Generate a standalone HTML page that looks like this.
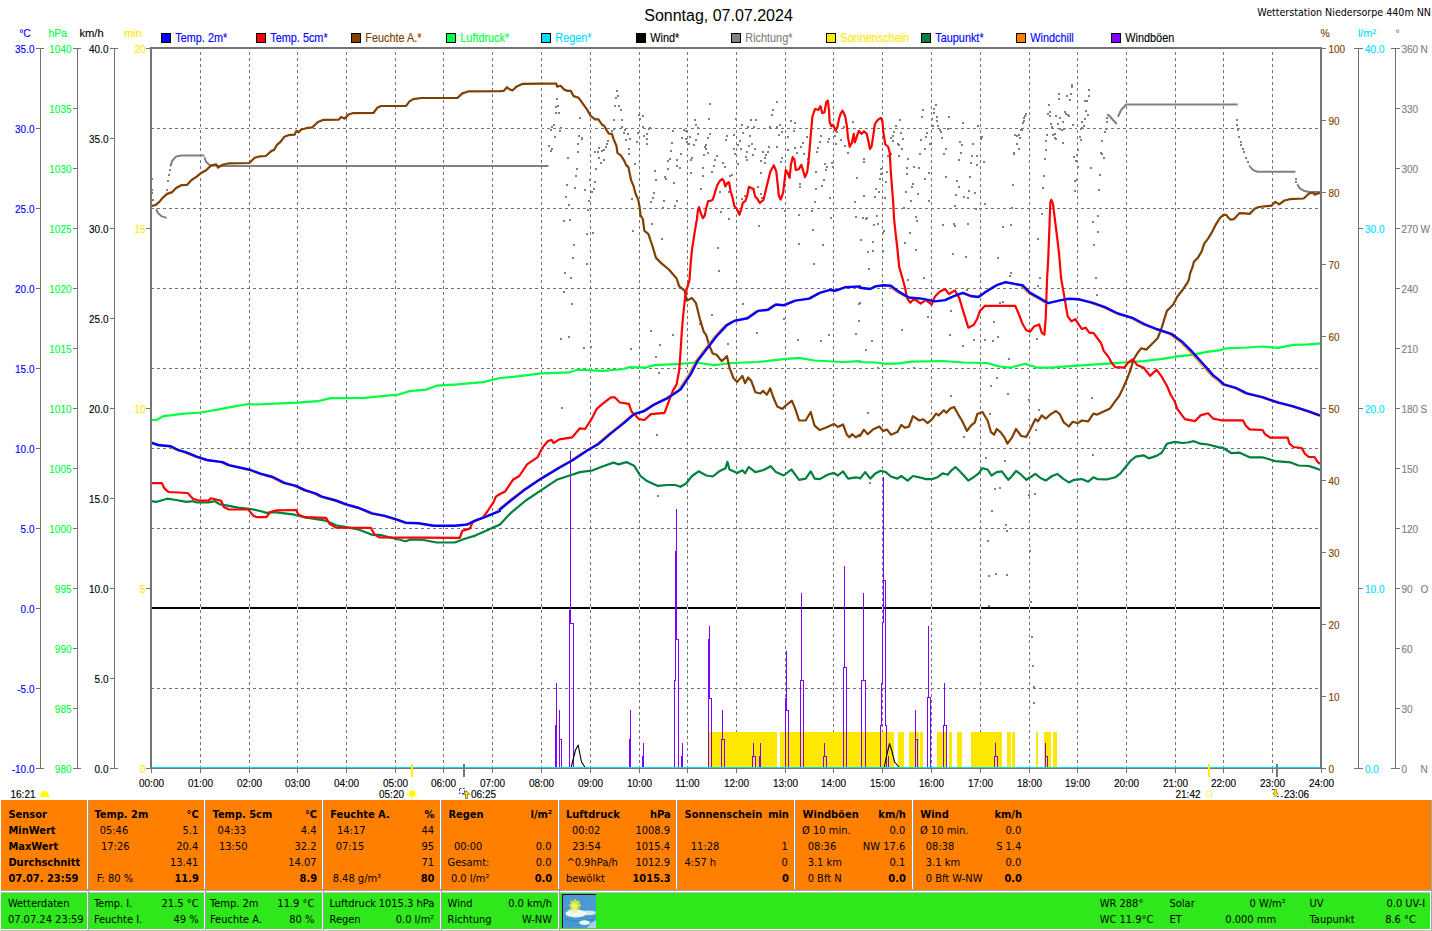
<!DOCTYPE html>
<html lang="de"><head><meta charset="utf-8"><title>Wetterstation Niedersorpe</title>
<style>html,body{margin:0;padding:0;background:#fff;overflow:hidden}body{width:1432px;height:931px;position:relative}</style></head>
<body>
<svg width="1432" height="931" viewBox="0 0 1432 931" style="position:absolute;left:0;top:0;display:block">
<rect x="0" y="0" width="1432" height="931" fill="#fff"/>
<text x="718.5" y="21" font-family='"Liberation Sans", sans-serif' font-size="16" text-anchor="middle" fill="#000">Sonntag, 07.07.2024</text>
<text x="1431" y="15.5" font-family='"DejaVu Sans Condensed", "DejaVu Sans", "Liberation Sans", sans-serif' font-size="10.6" text-anchor="end" fill="#000">Wetterstation Niedersorpe 440m NN</text>
<g font-family='"Liberation Sans", sans-serif' font-size="12.5">
<rect x="161.5" y="33.5" width="9" height="9" fill="#0000FF" stroke="#000" stroke-width="1"/>
<text transform="translate(175.3,42.3) scale(0.87,1)" fill="#0000FF" stroke="#0000FF" stroke-width="0.14">Temp. 2m*</text>
<rect x="256.5" y="33.5" width="9" height="9" fill="#FF0000" stroke="#000" stroke-width="1"/>
<text transform="translate(270.3,42.3) scale(0.87,1)" fill="#0000FF" stroke="#0000FF" stroke-width="0.14">Temp. 5cm*</text>
<rect x="351.5" y="33.5" width="9" height="9" fill="#804000" stroke="#000" stroke-width="1"/>
<text transform="translate(365.3,42.3) scale(0.87,1)" fill="#804000" stroke="#804000" stroke-width="0.14">Feuchte A.*</text>
<rect x="446.5" y="33.5" width="9" height="9" fill="#00FF40" stroke="#000" stroke-width="1"/>
<text transform="translate(460.3,42.3) scale(0.87,1)" fill="#00FF40" stroke="#00FF40" stroke-width="0.14">Luftdruck*</text>
<rect x="541.5" y="33.5" width="9" height="9" fill="#00DCFF" stroke="#000" stroke-width="1"/>
<text transform="translate(555.3,42.3) scale(0.87,1)" fill="#00DCFF" stroke="#00DCFF" stroke-width="0.14">Regen*</text>
<rect x="636.5" y="33.5" width="9" height="9" fill="#000000" stroke="#000" stroke-width="1"/>
<text transform="translate(650.3,42.3) scale(0.87,1)" fill="#000000" stroke="#000000" stroke-width="0.14">Wind*</text>
<rect x="731.5" y="33.5" width="9" height="9" fill="#808080" stroke="#000" stroke-width="1"/>
<text transform="translate(745.3,42.3) scale(0.87,1)" fill="#808080" stroke="#808080" stroke-width="0.14">Richtung*</text>
<rect x="826.5" y="33.5" width="9" height="9" fill="#FFE800" stroke="#000" stroke-width="1"/>
<text transform="translate(840.3,42.3) scale(0.87,1)" fill="#FFE800" stroke="#FFE800" stroke-width="0.14">Sonnenschein</text>
<rect x="921.5" y="33.5" width="9" height="9" fill="#008040" stroke="#000" stroke-width="1"/>
<text transform="translate(935.3,42.3) scale(0.87,1)" fill="#0000FF" stroke="#0000FF" stroke-width="0.14">Taupunkt*</text>
<rect x="1016.5" y="33.5" width="9" height="9" fill="#FF8000" stroke="#000" stroke-width="1"/>
<text transform="translate(1030.3,42.3) scale(0.87,1)" fill="#0000FF" stroke="#0000FF" stroke-width="0.14">Windchill</text>
<rect x="1111.5" y="33.5" width="9" height="9" fill="#8000FF" stroke="#000" stroke-width="1"/>
<text transform="translate(1125.3,42.3) scale(0.87,1)" fill="#000000" stroke="#000000" stroke-width="0.14">Windböen</text>
</g>
<rect x="152" y="607" width="1168" height="2" fill="#000" shape-rendering="crispEdges"/>
<g stroke="#747474" stroke-width="1" stroke-dasharray="3 3" shape-rendering="crispEdges" fill="none">
<path d="M151 128.5H1320"/>
<path d="M151 208.5H1320"/>
<path d="M151 288.5H1320"/>
<path d="M151 368.5H1320"/>
<path d="M151 448.5H1320"/>
<path d="M151 528.5H1320"/>
<path d="M151 688.5H1320"/>
</g>
<g fill="#fff" shape-rendering="crispEdges">
<rect x="200" y="49" width="1" height="718"/>
<rect x="249" y="49" width="1" height="718"/>
<rect x="297" y="49" width="1" height="718"/>
<rect x="346" y="49" width="1" height="718"/>
<rect x="395" y="49" width="1" height="718"/>
<rect x="443" y="49" width="1" height="718"/>
<rect x="492" y="49" width="1" height="718"/>
<rect x="541" y="49" width="1" height="718"/>
<rect x="590" y="49" width="1" height="718"/>
<rect x="639" y="49" width="1" height="718"/>
<rect x="687" y="49" width="1" height="718"/>
<rect x="736" y="49" width="1" height="718"/>
<rect x="785" y="49" width="1" height="718"/>
<rect x="833" y="49" width="1" height="718"/>
<rect x="882" y="49" width="1" height="718"/>
<rect x="931" y="49" width="1" height="718"/>
<rect x="980" y="49" width="1" height="718"/>
<rect x="1029" y="49" width="1" height="718"/>
<rect x="1077" y="49" width="1" height="718"/>
<rect x="1126" y="49" width="1" height="718"/>
<rect x="1175" y="49" width="1" height="718"/>
<rect x="1223" y="49" width="1" height="718"/>
<rect x="1272" y="49" width="1" height="718"/>
</g>
<g stroke="#747474" stroke-width="1" stroke-dasharray="3 3" shape-rendering="crispEdges" fill="none">
<path d="M200.5 52V767"/>
<path d="M249.5 52V767"/>
<path d="M297.5 52V767"/>
<path d="M346.5 52V767"/>
<path d="M395.5 52V767"/>
<path d="M443.5 52V767"/>
<path d="M492.5 52V767"/>
<path d="M541.5 52V767"/>
<path d="M590.5 52V767"/>
<path d="M639.5 52V767"/>
<path d="M687.5 52V767"/>
<path d="M736.5 52V767"/>
<path d="M785.5 52V767"/>
<path d="M833.5 52V767"/>
<path d="M882.5 52V767"/>
<path d="M931.5 52V767"/>
<path d="M980.5 52V767"/>
<path d="M1029.5 52V767"/>
<path d="M1077.5 52V767"/>
<path d="M1126.5 52V767"/>
<path d="M1175.5 52V767"/>
<path d="M1223.5 52V767"/>
<path d="M1272.5 52V767"/>
</g>
<g fill="#FFE800" shape-rendering="crispEdges">
<rect x="708.5" y="732" width="68.5" height="36"/>
<rect x="780.4" y="732" width="113.4" height="36"/>
<rect x="898.2" y="732" width="5.7" height="36"/>
<rect x="909.3" y="732" width="9.7" height="36"/>
<rect x="919.8" y="732" width="2.9" height="36"/>
<rect x="937.2" y="732" width="9.1" height="36"/>
<rect x="949.4" y="732" width="2.5" height="36"/>
<rect x="957.1" y="732" width="4.7" height="36"/>
<rect x="970.8" y="732" width="31.0" height="36"/>
<rect x="1007.0" y="732" width="3.6" height="36"/>
<rect x="1012.1" y="732" width="2.9" height="36"/>
<rect x="1035.9" y="732" width="2.1" height="36"/>
<rect x="1044.2" y="732" width="6.7" height="36"/>
<rect x="1052.7" y="732" width="4.1" height="36"/>
</g>
<g stroke="#8000FF" stroke-width="1" fill="none" stroke-linejoin="miter" shape-rendering="crispEdges">
<path d="M555.4 768.0 L555.4 725.5 L556.3 725.5 L556.3 683.0 L556.5 683.0 L556.5 768.0"/>
<path d="M559.2 768.0 L559.2 710.0 L559.4 710.0 L559.4 739.0 L561.3 739.0 L561.3 768.0"/>
<path d="M569.5 768.0 L569.5 610.0 L570.7 610.0 L570.7 451.0 L570.9 451.0 L570.9 623.0 L573.0 623.0 L573.0 768.0"/>
<path d="M629.3 768.0 L629.3 739.0 L630.2 739.0 L630.2 710.0 L630.4 710.0 L630.4 768.0"/>
<path d="M642.5 768.0 L642.5 756.0 L643.4 756.0 L643.4 743.0 L643.6 743.0 L643.6 768.0"/>
<path d="M674.4 768.0 L674.4 680.0 L675.3 680.0 L675.3 551.0 L676.2 551.0 L676.2 509.0 L676.4 509.0 L676.4 639.0 L678.3 639.0 L678.3 768.0"/>
<path d="M681.3 768.0 L681.3 756.0 L682.2 756.0 L682.2 743.0 L682.4 743.0 L682.4 768.0"/>
<path d="M708.4 768.0 L708.4 639.0 L709.6 639.0 L709.6 626.0 L709.8 626.0 L709.8 698.0 L711.4 698.0 L711.4 768.0"/>
<path d="M721.6 768.0 L721.6 739.0 L722.5 739.0 L722.5 710.0 L722.7 710.0 L722.7 739.0 L724.3 739.0 L724.3 768.0"/>
<path d="M752.6 768.0 L752.6 756.0 L753.5 756.0 L753.5 743.0 L753.7 743.0 L753.7 756.0 L755.2 756.0 L755.2 768.0"/>
<path d="M759.5 768.0 L759.5 756.0 L760.4 756.0 L760.4 743.0 L760.6 743.0 L760.6 768.0"/>
<path d="M785.6 768.0 L785.6 698.0 L786.3 698.0 L786.3 651.0 L786.5 651.0 L786.5 710.0 L788.3 710.0 L788.3 768.0"/>
<path d="M800.4 768.0 L800.4 680.0 L801.6 680.0 L801.6 593.0 L801.8 593.0 L801.8 680.0 L803.5 680.0 L803.5 768.0"/>
<path d="M823.4 768.0 L823.4 756.0 L824.3 756.0 L824.3 743.0 L824.5 743.0 L824.5 756.0 L826.0 756.0 L826.0 768.0"/>
<path d="M843.4 768.0 L843.4 667.0 L844.6 667.0 L844.6 566.0 L844.8 566.0 L844.8 667.0 L846.5 667.0 L846.5 768.0"/>
<path d="M861.8 768.0 L861.8 680.0 L863.0 680.0 L863.0 593.0 L863.2 593.0 L863.2 680.0 L865.0 680.0 L865.0 768.0"/>
<path d="M880.2 768.0 L880.2 725.0 L881.0 725.0 L881.0 683.0 L882.2 683.0 L882.2 622.0 L883.4 622.0 L883.4 477.0 L883.6 477.0 L883.6 580.0 L885.6 580.0 L885.6 725.0 L886.5 725.0 L886.5 768.0"/>
<path d="M888.6 768.0 L888.6 756.0 L888.8 756.0 L888.8 768.0"/>
<path d="M915.3 768.0 L915.3 710.0 L915.5 710.0 L915.5 739.0 L917.1 739.0 L917.1 768.0"/>
<path d="M927.3 768.0 L927.3 697.0 L928.3 697.0 L928.3 626.0 L928.5 626.0 L928.5 697.0 L930.3 697.0 L930.3 768.0"/>
<path d="M943.3 768.0 L943.3 725.0 L944.5 725.0 L944.5 683.0 L944.7 683.0 L944.7 725.0 L946.6 725.0 L946.6 768.0"/>
<path d="M994.4 768.0 L994.4 756.0 L995.3 756.0 L995.3 743.0 L995.5 743.0 L995.5 756.0 L997.0 756.0 L997.0 768.0"/>
<path d="M1045.6 768.0 L1045.6 743.0 L1045.8 743.0 L1045.8 756.0 L1047.4 756.0 L1047.4 768.0"/>
</g>
<g fill="#808080" shape-rendering="crispEdges">
<rect x="151" y="178" width="2" height="2"/>
<rect x="151" y="189" width="2" height="2"/>
<rect x="151" y="192" width="2" height="2"/>
<rect x="152" y="199" width="2" height="2"/>
<rect x="155" y="204" width="2" height="2"/>
<rect x="165" y="194" width="2" height="2"/>
<rect x="166" y="189" width="2" height="2"/>
<rect x="167" y="180" width="2" height="2"/>
<rect x="168" y="174" width="2" height="2"/>
<rect x="169" y="169" width="2" height="2"/>
<rect x="1236" y="119" width="2" height="2"/>
<rect x="1236" y="124" width="2" height="2"/>
<rect x="1237" y="129" width="2" height="2"/>
<rect x="1238" y="136" width="2" height="2"/>
<rect x="1240" y="141" width="2" height="2"/>
<rect x="1240" y="144" width="2" height="2"/>
<rect x="1242" y="148" width="2" height="2"/>
<rect x="1243" y="151" width="2" height="2"/>
<rect x="1245" y="157" width="2" height="2"/>
<rect x="1247" y="161" width="2" height="2"/>
<rect x="1295" y="178" width="2" height="2"/>
<rect x="1295" y="181" width="2" height="2"/>
<rect x="569" y="219" width="2" height="2"/>
<rect x="563" y="220" width="2" height="2"/>
<rect x="586" y="233" width="2" height="2"/>
<rect x="592" y="232" width="2" height="2"/>
<rect x="573" y="244" width="2" height="2"/>
<rect x="572" y="257" width="2" height="2"/>
<rect x="586" y="263" width="2" height="2"/>
<rect x="564" y="272" width="2" height="2"/>
<rect x="570" y="277" width="2" height="2"/>
<rect x="632" y="230" width="2" height="2"/>
<rect x="651" y="223" width="2" height="2"/>
<rect x="661" y="238" width="2" height="2"/>
<rect x="717" y="247" width="2" height="2"/>
<rect x="718" y="270" width="2" height="2"/>
<rect x="758" y="225" width="2" height="2"/>
<rect x="798" y="243" width="2" height="2"/>
<rect x="812" y="229" width="2" height="2"/>
<rect x="813" y="263" width="2" height="2"/>
<rect x="822" y="244" width="2" height="2"/>
<rect x="865" y="218" width="2" height="2"/>
<rect x="860" y="239" width="2" height="2"/>
<rect x="868" y="268" width="2" height="2"/>
<rect x="867" y="251" width="2" height="2"/>
<rect x="872" y="241" width="2" height="2"/>
<rect x="872" y="250" width="2" height="2"/>
<rect x="873" y="224" width="2" height="2"/>
<rect x="877" y="223" width="2" height="2"/>
<rect x="882" y="232" width="2" height="2"/>
<rect x="883" y="230" width="2" height="2"/>
<rect x="882" y="250" width="2" height="2"/>
<rect x="916" y="220" width="2" height="2"/>
<rect x="909" y="232" width="2" height="2"/>
<rect x="904" y="242" width="2" height="2"/>
<rect x="915" y="249" width="2" height="2"/>
<rect x="942" y="224" width="2" height="2"/>
<rect x="923" y="277" width="2" height="2"/>
<rect x="953" y="223" width="2" height="2"/>
<rect x="954" y="225" width="2" height="2"/>
<rect x="952" y="253" width="2" height="2"/>
<rect x="965" y="256" width="2" height="2"/>
<rect x="967" y="223" width="2" height="2"/>
<rect x="1010" y="224" width="2" height="2"/>
<rect x="1002" y="226" width="2" height="2"/>
<rect x="997" y="257" width="2" height="2"/>
<rect x="1010" y="272" width="2" height="2"/>
<rect x="1009" y="275" width="2" height="2"/>
<rect x="1037" y="238" width="2" height="2"/>
<rect x="1039" y="277" width="2" height="2"/>
<rect x="1092" y="221" width="2" height="2"/>
<rect x="1097" y="231" width="2" height="2"/>
<rect x="1093" y="244" width="2" height="2"/>
<rect x="1095" y="277" width="2" height="2"/>
<rect x="563" y="291" width="2" height="2"/>
<rect x="571" y="303" width="2" height="2"/>
<rect x="560" y="338" width="2" height="2"/>
<rect x="568" y="336" width="2" height="2"/>
<rect x="583" y="347" width="2" height="2"/>
<rect x="590" y="346" width="2" height="2"/>
<rect x="561" y="407" width="2" height="2"/>
<rect x="630" y="348" width="2" height="2"/>
<rect x="650" y="330" width="2" height="2"/>
<rect x="659" y="344" width="2" height="2"/>
<rect x="655" y="356" width="2" height="2"/>
<rect x="658" y="372" width="2" height="2"/>
<rect x="672" y="334" width="2" height="2"/>
<rect x="656" y="434" width="2" height="2"/>
<rect x="657" y="495" width="2" height="2"/>
<rect x="699" y="323" width="2" height="2"/>
<rect x="711" y="314" width="2" height="2"/>
<rect x="727" y="343" width="2" height="2"/>
<rect x="742" y="303" width="2" height="2"/>
<rect x="756" y="332" width="2" height="2"/>
<rect x="783" y="318" width="2" height="2"/>
<rect x="797" y="339" width="2" height="2"/>
<rect x="820" y="340" width="2" height="2"/>
<rect x="828" y="334" width="2" height="2"/>
<rect x="855" y="333" width="2" height="2"/>
<rect x="858" y="320" width="2" height="2"/>
<rect x="858" y="303" width="2" height="2"/>
<rect x="859" y="302" width="2" height="2"/>
<rect x="865" y="349" width="2" height="2"/>
<rect x="871" y="340" width="2" height="2"/>
<rect x="877" y="367" width="2" height="2"/>
<rect x="901" y="329" width="2" height="2"/>
<rect x="913" y="367" width="2" height="2"/>
<rect x="927" y="316" width="2" height="2"/>
<rect x="950" y="310" width="2" height="2"/>
<rect x="949" y="334" width="2" height="2"/>
<rect x="962" y="345" width="2" height="2"/>
<rect x="973" y="339" width="2" height="2"/>
<rect x="984" y="339" width="2" height="2"/>
<rect x="992" y="340" width="2" height="2"/>
<rect x="997" y="336" width="2" height="2"/>
<rect x="993" y="321" width="2" height="2"/>
<rect x="999" y="302" width="2" height="2"/>
<rect x="1002" y="301" width="2" height="2"/>
<rect x="1008" y="358" width="2" height="2"/>
<rect x="996" y="377" width="2" height="2"/>
<rect x="990" y="385" width="2" height="2"/>
<rect x="1007" y="393" width="2" height="2"/>
<rect x="950" y="395" width="2" height="2"/>
<rect x="867" y="412" width="2" height="2"/>
<rect x="963" y="436" width="2" height="2"/>
<rect x="989" y="413" width="2" height="2"/>
<rect x="1038" y="409" width="2" height="2"/>
<rect x="1035" y="429" width="2" height="2"/>
<rect x="1028" y="399" width="2" height="2"/>
<rect x="1091" y="397" width="2" height="2"/>
<rect x="1092" y="454" width="2" height="2"/>
<rect x="985" y="457" width="2" height="2"/>
<rect x="1004" y="460" width="2" height="2"/>
<rect x="994" y="488" width="2" height="2"/>
<rect x="999" y="487" width="2" height="2"/>
<rect x="1028" y="494" width="2" height="2"/>
<rect x="1034" y="493" width="2" height="2"/>
<rect x="991" y="510" width="2" height="2"/>
<rect x="869" y="482" width="2" height="2"/>
<rect x="1096" y="294" width="2" height="2"/>
<rect x="1036" y="338" width="2" height="2"/>
<rect x="907" y="279" width="2" height="2"/>
<rect x="966" y="289" width="2" height="2"/>
<rect x="1037" y="285" width="2" height="2"/>
<rect x="991" y="510" width="2" height="2"/>
<rect x="1005" y="524" width="2" height="2"/>
<rect x="1006" y="530" width="2" height="2"/>
<rect x="987" y="540" width="2" height="2"/>
<rect x="1029" y="550" width="2" height="2"/>
<rect x="988" y="575" width="2" height="2"/>
<rect x="995" y="573" width="2" height="2"/>
<rect x="1006" y="574" width="2" height="2"/>
<rect x="988" y="605" width="2" height="2"/>
<rect x="1030" y="601" width="2" height="2"/>
<rect x="1031" y="636" width="2" height="2"/>
<rect x="1032" y="665" width="2" height="2"/>
<rect x="1033" y="686" width="2" height="2"/>
<rect x="1033" y="702" width="2" height="2"/>
<rect x="776" y="101" width="2" height="2"/>
<rect x="772" y="109" width="2" height="2"/>
<rect x="771" y="114" width="2" height="2"/>
<rect x="790" y="120" width="2" height="2"/>
<rect x="794" y="122" width="2" height="2"/>
<rect x="769" y="126" width="2" height="2"/>
<rect x="776" y="126" width="2" height="2"/>
<rect x="779" y="124" width="2" height="2"/>
<rect x="781" y="131" width="2" height="2"/>
<rect x="778" y="134" width="2" height="2"/>
<rect x="787" y="136" width="2" height="2"/>
<rect x="793" y="130" width="2" height="2"/>
<rect x="806" y="136" width="2" height="2"/>
<rect x="820" y="135" width="2" height="2"/>
<rect x="828" y="138" width="2" height="2"/>
<rect x="827" y="141" width="2" height="2"/>
<rect x="819" y="141" width="2" height="2"/>
<rect x="802" y="142" width="2" height="2"/>
<rect x="800" y="146" width="2" height="2"/>
<rect x="776" y="146" width="2" height="2"/>
<rect x="768" y="146" width="2" height="2"/>
<rect x="767" y="151" width="2" height="2"/>
<rect x="762" y="151" width="2" height="2"/>
<rect x="765" y="154" width="2" height="2"/>
<rect x="764" y="157" width="2" height="2"/>
<rect x="760" y="160" width="2" height="2"/>
<rect x="764" y="162" width="2" height="2"/>
<rect x="781" y="157" width="2" height="2"/>
<rect x="780" y="161" width="2" height="2"/>
<rect x="787" y="149" width="2" height="2"/>
<rect x="794" y="147" width="2" height="2"/>
<rect x="796" y="152" width="2" height="2"/>
<rect x="803" y="153" width="2" height="2"/>
<rect x="817" y="147" width="2" height="2"/>
<rect x="816" y="151" width="2" height="2"/>
<rect x="807" y="158" width="2" height="2"/>
<rect x="808" y="162" width="2" height="2"/>
<rect x="824" y="163" width="2" height="2"/>
<rect x="826" y="166" width="2" height="2"/>
<rect x="825" y="169" width="2" height="2"/>
<rect x="815" y="171" width="2" height="2"/>
<rect x="823" y="179" width="2" height="2"/>
<rect x="821" y="185" width="2" height="2"/>
<rect x="799" y="183" width="2" height="2"/>
<rect x="799" y="186" width="2" height="2"/>
<rect x="815" y="188" width="2" height="2"/>
<rect x="829" y="197" width="2" height="2"/>
<rect x="814" y="201" width="2" height="2"/>
<rect x="811" y="210" width="2" height="2"/>
<rect x="798" y="214" width="2" height="2"/>
<rect x="784" y="210" width="2" height="2"/>
<rect x="830" y="217" width="2" height="2"/>
<rect x="760" y="172" width="2" height="2"/>
<rect x="760" y="193" width="2" height="2"/>
<rect x="761" y="197" width="2" height="2"/>
<rect x="852" y="121" width="2" height="2"/>
<rect x="843" y="126" width="2" height="2"/>
<rect x="836" y="131" width="2" height="2"/>
<rect x="834" y="135" width="2" height="2"/>
<rect x="835" y="143" width="2" height="2"/>
<rect x="840" y="139" width="2" height="2"/>
<rect x="844" y="145" width="2" height="2"/>
<rect x="847" y="152" width="2" height="2"/>
<rect x="863" y="158" width="2" height="2"/>
<rect x="863" y="161" width="2" height="2"/>
<rect x="831" y="162" width="2" height="2"/>
<rect x="832" y="166" width="2" height="2"/>
<rect x="856" y="177" width="2" height="2"/>
<rect x="875" y="188" width="2" height="2"/>
<rect x="878" y="191" width="2" height="2"/>
<rect x="863" y="195" width="2" height="2"/>
<rect x="874" y="196" width="2" height="2"/>
<rect x="854" y="201" width="2" height="2"/>
<rect x="855" y="216" width="2" height="2"/>
<rect x="862" y="217" width="2" height="2"/>
<rect x="866" y="217" width="2" height="2"/>
<rect x="876" y="215" width="2" height="2"/>
<rect x="884" y="197" width="2" height="2"/>
<rect x="885" y="181" width="2" height="2"/>
<rect x="879" y="178" width="2" height="2"/>
<rect x="880" y="173" width="2" height="2"/>
<rect x="880" y="168" width="2" height="2"/>
<rect x="886" y="171" width="2" height="2"/>
<rect x="887" y="155" width="2" height="2"/>
<rect x="890" y="153" width="2" height="2"/>
<rect x="899" y="119" width="2" height="2"/>
<rect x="895" y="125" width="2" height="2"/>
<rect x="893" y="131" width="2" height="2"/>
<rect x="900" y="132" width="2" height="2"/>
<rect x="892" y="135" width="2" height="2"/>
<rect x="890" y="137" width="2" height="2"/>
<rect x="902" y="138" width="2" height="2"/>
<rect x="892" y="140" width="2" height="2"/>
<rect x="897" y="143" width="2" height="2"/>
<rect x="898" y="144" width="2" height="2"/>
<rect x="901" y="148" width="2" height="2"/>
<rect x="898" y="155" width="2" height="2"/>
<rect x="907" y="158" width="2" height="2"/>
<rect x="906" y="167" width="2" height="2"/>
<rect x="913" y="166" width="2" height="2"/>
<rect x="918" y="167" width="2" height="2"/>
<rect x="906" y="173" width="2" height="2"/>
<rect x="912" y="183" width="2" height="2"/>
<rect x="911" y="186" width="2" height="2"/>
<rect x="905" y="191" width="2" height="2"/>
<rect x="917" y="193" width="2" height="2"/>
<rect x="910" y="200" width="2" height="2"/>
<rect x="903" y="207" width="2" height="2"/>
<rect x="915" y="216" width="2" height="2"/>
<rect x="922" y="109" width="2" height="2"/>
<rect x="921" y="116" width="2" height="2"/>
<rect x="935" y="104" width="2" height="2"/>
<rect x="933" y="108" width="2" height="2"/>
<rect x="933" y="112" width="2" height="2"/>
<rect x="936" y="116" width="2" height="2"/>
<rect x="931" y="118" width="2" height="2"/>
<rect x="936" y="120" width="2" height="2"/>
<rect x="932" y="125" width="2" height="2"/>
<rect x="937" y="125" width="2" height="2"/>
<rect x="939" y="129" width="2" height="2"/>
<rect x="940" y="131" width="2" height="2"/>
<rect x="926" y="132" width="2" height="2"/>
<rect x="925" y="136" width="2" height="2"/>
<rect x="941" y="137" width="2" height="2"/>
<rect x="920" y="139" width="2" height="2"/>
<rect x="929" y="143" width="2" height="2"/>
<rect x="924" y="148" width="2" height="2"/>
<rect x="919" y="153" width="2" height="2"/>
<rect x="945" y="148" width="2" height="2"/>
<rect x="943" y="153" width="2" height="2"/>
<rect x="928" y="172" width="2" height="2"/>
<rect x="924" y="178" width="2" height="2"/>
<rect x="945" y="176" width="2" height="2"/>
<rect x="928" y="200" width="2" height="2"/>
<rect x="948" y="116" width="2" height="2"/>
<rect x="947" y="128" width="2" height="2"/>
<rect x="962" y="122" width="2" height="2"/>
<rect x="959" y="141" width="2" height="2"/>
<rect x="961" y="144" width="2" height="2"/>
<rect x="972" y="143" width="2" height="2"/>
<rect x="960" y="152" width="2" height="2"/>
<rect x="958" y="159" width="2" height="2"/>
<rect x="971" y="155" width="2" height="2"/>
<rect x="976" y="155" width="2" height="2"/>
<rect x="970" y="162" width="2" height="2"/>
<rect x="976" y="164" width="2" height="2"/>
<rect x="983" y="161" width="2" height="2"/>
<rect x="969" y="176" width="2" height="2"/>
<rect x="956" y="180" width="2" height="2"/>
<rect x="958" y="186" width="2" height="2"/>
<rect x="968" y="190" width="2" height="2"/>
<rect x="974" y="192" width="2" height="2"/>
<rect x="955" y="194" width="2" height="2"/>
<rect x="963" y="196" width="2" height="2"/>
<rect x="967" y="197" width="2" height="2"/>
<rect x="954" y="205" width="2" height="2"/>
<rect x="975" y="208" width="2" height="2"/>
<rect x="984" y="203" width="2" height="2"/>
<rect x="977" y="125" width="2" height="2"/>
<rect x="980" y="138" width="2" height="2"/>
<rect x="981" y="136" width="2" height="2"/>
<rect x="556" y="98" width="2" height="2"/>
<rect x="555" y="106" width="2" height="2"/>
<rect x="557" y="105" width="2" height="2"/>
<rect x="555" y="112" width="2" height="2"/>
<rect x="558" y="112" width="2" height="2"/>
<rect x="579" y="117" width="2" height="2"/>
<rect x="553" y="124" width="2" height="2"/>
<rect x="551" y="126" width="2" height="2"/>
<rect x="550" y="129" width="2" height="2"/>
<rect x="560" y="127" width="2" height="2"/>
<rect x="559" y="130" width="2" height="2"/>
<rect x="554" y="136" width="2" height="2"/>
<rect x="578" y="135" width="2" height="2"/>
<rect x="581" y="137" width="2" height="2"/>
<rect x="581" y="138" width="2" height="2"/>
<rect x="577" y="143" width="2" height="2"/>
<rect x="548" y="145" width="2" height="2"/>
<rect x="551" y="148" width="2" height="2"/>
<rect x="550" y="150" width="2" height="2"/>
<rect x="577" y="151" width="2" height="2"/>
<rect x="567" y="157" width="2" height="2"/>
<rect x="576" y="168" width="2" height="2"/>
<rect x="575" y="175" width="2" height="2"/>
<rect x="566" y="184" width="2" height="2"/>
<rect x="574" y="187" width="2" height="2"/>
<rect x="584" y="189" width="2" height="2"/>
<rect x="565" y="196" width="2" height="2"/>
<rect x="568" y="204" width="2" height="2"/>
<rect x="569" y="219" width="2" height="2"/>
<rect x="616" y="90" width="2" height="2"/>
<rect x="617" y="95" width="2" height="2"/>
<rect x="615" y="97" width="2" height="2"/>
<rect x="614" y="105" width="2" height="2"/>
<rect x="618" y="105" width="2" height="2"/>
<rect x="620" y="109" width="2" height="2"/>
<rect x="613" y="119" width="2" height="2"/>
<rect x="621" y="119" width="2" height="2"/>
<rect x="621" y="126" width="2" height="2"/>
<rect x="613" y="128" width="2" height="2"/>
<rect x="611" y="130" width="2" height="2"/>
<rect x="624" y="129" width="2" height="2"/>
<rect x="623" y="132" width="2" height="2"/>
<rect x="627" y="133" width="2" height="2"/>
<rect x="625" y="139" width="2" height="2"/>
<rect x="629" y="138" width="2" height="2"/>
<rect x="607" y="140" width="2" height="2"/>
<rect x="606" y="143" width="2" height="2"/>
<rect x="605" y="146" width="2" height="2"/>
<rect x="603" y="149" width="2" height="2"/>
<rect x="601" y="150" width="2" height="2"/>
<rect x="598" y="147" width="2" height="2"/>
<rect x="594" y="151" width="2" height="2"/>
<rect x="597" y="151" width="2" height="2"/>
<rect x="598" y="157" width="2" height="2"/>
<rect x="603" y="159" width="2" height="2"/>
<rect x="600" y="162" width="2" height="2"/>
<rect x="595" y="168" width="2" height="2"/>
<rect x="628" y="148" width="2" height="2"/>
<rect x="628" y="153" width="2" height="2"/>
<rect x="594" y="181" width="2" height="2"/>
<rect x="589" y="179" width="2" height="2"/>
<rect x="593" y="188" width="2" height="2"/>
<rect x="591" y="191" width="2" height="2"/>
<rect x="588" y="200" width="2" height="2"/>
<rect x="587" y="209" width="2" height="2"/>
<rect x="631" y="198" width="2" height="2"/>
<rect x="634" y="163" width="2" height="2"/>
<rect x="638" y="114" width="2" height="2"/>
<rect x="642" y="115" width="2" height="2"/>
<rect x="639" y="118" width="2" height="2"/>
<rect x="642" y="126" width="2" height="2"/>
<rect x="649" y="127" width="2" height="2"/>
<rect x="648" y="128" width="2" height="2"/>
<rect x="637" y="132" width="2" height="2"/>
<rect x="646" y="133" width="2" height="2"/>
<rect x="643" y="135" width="2" height="2"/>
<rect x="636" y="141" width="2" height="2"/>
<rect x="646" y="138" width="2" height="2"/>
<rect x="646" y="143" width="2" height="2"/>
<rect x="654" y="170" width="2" height="2"/>
<rect x="655" y="179" width="2" height="2"/>
<rect x="653" y="192" width="2" height="2"/>
<rect x="652" y="197" width="2" height="2"/>
<rect x="650" y="201" width="2" height="2"/>
<rect x="640" y="215" width="2" height="2"/>
<rect x="672" y="130" width="2" height="2"/>
<rect x="671" y="142" width="2" height="2"/>
<rect x="670" y="150" width="2" height="2"/>
<rect x="669" y="158" width="2" height="2"/>
<rect x="667" y="160" width="2" height="2"/>
<rect x="676" y="159" width="2" height="2"/>
<rect x="667" y="168" width="2" height="2"/>
<rect x="664" y="176" width="2" height="2"/>
<rect x="665" y="178" width="2" height="2"/>
<rect x="673" y="182" width="2" height="2"/>
<rect x="663" y="200" width="2" height="2"/>
<rect x="676" y="200" width="2" height="2"/>
<rect x="662" y="207" width="2" height="2"/>
<rect x="674" y="205" width="2" height="2"/>
<rect x="680" y="153" width="2" height="2"/>
<rect x="676" y="165" width="2" height="2"/>
<rect x="679" y="167" width="2" height="2"/>
<rect x="683" y="129" width="2" height="2"/>
<rect x="685" y="130" width="2" height="2"/>
<rect x="681" y="137" width="2" height="2"/>
<rect x="685" y="138" width="2" height="2"/>
<rect x="689" y="136" width="2" height="2"/>
<rect x="686" y="141" width="2" height="2"/>
<rect x="688" y="143" width="2" height="2"/>
<rect x="694" y="119" width="2" height="2"/>
<rect x="695" y="124" width="2" height="2"/>
<rect x="697" y="127" width="2" height="2"/>
<rect x="697" y="133" width="2" height="2"/>
<rect x="695" y="139" width="2" height="2"/>
<rect x="693" y="144" width="2" height="2"/>
<rect x="691" y="157" width="2" height="2"/>
<rect x="690" y="159" width="2" height="2"/>
<rect x="690" y="172" width="2" height="2"/>
<rect x="708" y="118" width="2" height="2"/>
<rect x="709" y="103" width="2" height="2"/>
<rect x="709" y="133" width="2" height="2"/>
<rect x="707" y="137" width="2" height="2"/>
<rect x="705" y="144" width="2" height="2"/>
<rect x="704" y="146" width="2" height="2"/>
<rect x="705" y="148" width="2" height="2"/>
<rect x="703" y="154" width="2" height="2"/>
<rect x="707" y="152" width="2" height="2"/>
<rect x="702" y="167" width="2" height="2"/>
<rect x="702" y="175" width="2" height="2"/>
<rect x="700" y="188" width="2" height="2"/>
<rect x="711" y="171" width="2" height="2"/>
<rect x="713" y="165" width="2" height="2"/>
<rect x="714" y="159" width="2" height="2"/>
<rect x="716" y="155" width="2" height="2"/>
<rect x="722" y="162" width="2" height="2"/>
<rect x="724" y="166" width="2" height="2"/>
<rect x="725" y="139" width="2" height="2"/>
<rect x="726" y="135" width="2" height="2"/>
<rect x="729" y="175" width="2" height="2"/>
<rect x="731" y="174" width="2" height="2"/>
<rect x="719" y="191" width="2" height="2"/>
<rect x="728" y="191" width="2" height="2"/>
<rect x="720" y="211" width="2" height="2"/>
<rect x="728" y="218" width="2" height="2"/>
<rect x="735" y="118" width="2" height="2"/>
<rect x="733" y="134" width="2" height="2"/>
<rect x="741" y="124" width="2" height="2"/>
<rect x="742" y="132" width="2" height="2"/>
<rect x="747" y="126" width="2" height="2"/>
<rect x="750" y="119" width="2" height="2"/>
<rect x="755" y="119" width="2" height="2"/>
<rect x="753" y="126" width="2" height="2"/>
<rect x="749" y="135" width="2" height="2"/>
<rect x="739" y="140" width="2" height="2"/>
<rect x="737" y="144" width="2" height="2"/>
<rect x="733" y="148" width="2" height="2"/>
<rect x="734" y="153" width="2" height="2"/>
<rect x="740" y="148" width="2" height="2"/>
<rect x="746" y="151" width="2" height="2"/>
<rect x="748" y="145" width="2" height="2"/>
<rect x="751" y="143" width="2" height="2"/>
<rect x="754" y="148" width="2" height="2"/>
<rect x="752" y="154" width="2" height="2"/>
<rect x="745" y="156" width="2" height="2"/>
<rect x="746" y="159" width="2" height="2"/>
<rect x="737" y="163" width="2" height="2"/>
<rect x="741" y="198" width="2" height="2"/>
<rect x="744" y="195" width="2" height="2"/>
<rect x="757" y="186" width="2" height="2"/>
<rect x="1071" y="84" width="2" height="2"/>
<rect x="1071" y="86" width="2" height="2"/>
<rect x="1058" y="93" width="2" height="2"/>
<rect x="1058" y="98" width="2" height="2"/>
<rect x="1066" y="95" width="2" height="2"/>
<rect x="1070" y="93" width="2" height="2"/>
<rect x="1069" y="99" width="2" height="2"/>
<rect x="1088" y="89" width="2" height="2"/>
<rect x="1088" y="95" width="2" height="2"/>
<rect x="1084" y="100" width="2" height="2"/>
<rect x="1086" y="100" width="2" height="2"/>
<rect x="1048" y="104" width="2" height="2"/>
<rect x="1049" y="111" width="2" height="2"/>
<rect x="1047" y="113" width="2" height="2"/>
<rect x="1049" y="115" width="2" height="2"/>
<rect x="1055" y="115" width="2" height="2"/>
<rect x="1059" y="117" width="2" height="2"/>
<rect x="1062" y="121" width="2" height="2"/>
<rect x="1057" y="123" width="2" height="2"/>
<rect x="1050" y="123" width="2" height="2"/>
<rect x="1051" y="126" width="2" height="2"/>
<rect x="1059" y="128" width="2" height="2"/>
<rect x="1061" y="129" width="2" height="2"/>
<rect x="1063" y="128" width="2" height="2"/>
<rect x="1072" y="124" width="2" height="2"/>
<rect x="1064" y="111" width="2" height="2"/>
<rect x="1065" y="113" width="2" height="2"/>
<rect x="1067" y="114" width="2" height="2"/>
<rect x="1068" y="115" width="2" height="2"/>
<rect x="1085" y="110" width="2" height="2"/>
<rect x="1087" y="114" width="2" height="2"/>
<rect x="1084" y="118" width="2" height="2"/>
<rect x="1081" y="121" width="2" height="2"/>
<rect x="1083" y="125" width="2" height="2"/>
<rect x="1081" y="127" width="2" height="2"/>
<rect x="1080" y="128" width="2" height="2"/>
<rect x="1025" y="113" width="2" height="2"/>
<rect x="1024" y="115" width="2" height="2"/>
<rect x="1023" y="117" width="2" height="2"/>
<rect x="1023" y="120" width="2" height="2"/>
<rect x="1022" y="122" width="2" height="2"/>
<rect x="1021" y="129" width="2" height="2"/>
<rect x="1020" y="129" width="2" height="2"/>
<rect x="1014" y="134" width="2" height="2"/>
<rect x="1016" y="135" width="2" height="2"/>
<rect x="1018" y="134" width="2" height="2"/>
<rect x="1019" y="137" width="2" height="2"/>
<rect x="1016" y="143" width="2" height="2"/>
<rect x="1018" y="148" width="2" height="2"/>
<rect x="1013" y="152" width="2" height="2"/>
<rect x="1013" y="153" width="2" height="2"/>
<rect x="1046" y="134" width="2" height="2"/>
<rect x="1052" y="134" width="2" height="2"/>
<rect x="1054" y="133" width="2" height="2"/>
<rect x="1054" y="137" width="2" height="2"/>
<rect x="1055" y="138" width="2" height="2"/>
<rect x="1045" y="140" width="2" height="2"/>
<rect x="1062" y="142" width="2" height="2"/>
<rect x="1045" y="149" width="2" height="2"/>
<rect x="1044" y="158" width="2" height="2"/>
<rect x="1043" y="175" width="2" height="2"/>
<rect x="1042" y="187" width="2" height="2"/>
<rect x="1041" y="213" width="2" height="2"/>
<rect x="1012" y="184" width="2" height="2"/>
<rect x="1011" y="207" width="2" height="2"/>
<rect x="983" y="161" width="2" height="2"/>
<rect x="984" y="203" width="2" height="2"/>
<rect x="1079" y="136" width="2" height="2"/>
<rect x="1080" y="139" width="2" height="2"/>
<rect x="1077" y="149" width="2" height="2"/>
<rect x="1073" y="156" width="2" height="2"/>
<rect x="1076" y="154" width="2" height="2"/>
<rect x="1075" y="160" width="2" height="2"/>
<rect x="1076" y="160" width="2" height="2"/>
<rect x="1077" y="166" width="2" height="2"/>
<rect x="1076" y="179" width="2" height="2"/>
<rect x="1074" y="180" width="2" height="2"/>
<rect x="1074" y="190" width="2" height="2"/>
<rect x="1090" y="167" width="2" height="2"/>
<rect x="1099" y="174" width="2" height="2"/>
<rect x="1098" y="189" width="2" height="2"/>
<rect x="1097" y="215" width="2" height="2"/>
<rect x="1101" y="140" width="2" height="2"/>
<rect x="1104" y="131" width="2" height="2"/>
<rect x="1105" y="128" width="2" height="2"/>
<rect x="1106" y="121" width="2" height="2"/>
<rect x="1106" y="117" width="2" height="2"/>
<rect x="1107" y="114" width="2" height="2"/>
<rect x="1100" y="152" width="2" height="2"/>
<rect x="1101" y="153" width="2" height="2"/>
<rect x="1103" y="157" width="2" height="2"/>
</g>
<polyline points="156.0,208.9 158.1,213.3 161.9,216.4 166.6,217.9" fill="none" stroke="#808080" stroke-width="2" stroke-linejoin="round" stroke-linecap="butt" />
<polyline points="170.4,166.4 172.2,160.7 176.1,156.6 181.3,155.5 204.5,155.5" fill="none" stroke="#808080" stroke-width="2" stroke-linejoin="round" stroke-linecap="butt" />
<polyline points="204.5,157.3 206.0,161.7 209.6,165.1 217.4,166.1 500.0,166.1 548.5,166.1" fill="none" stroke="#808080" stroke-width="2" stroke-linejoin="round" stroke-linecap="butt" />
<polyline points="1108.6,115.0 1116.7,124.0" fill="none" stroke="#808080" stroke-width="2" stroke-linejoin="round" stroke-linecap="butt" />
<polyline points="1117.9,116.7 1121.0,110.2 1126.1,104.5 1220.0,104.4 1237.7,104.4" fill="none" stroke="#808080" stroke-width="2" stroke-linejoin="round" stroke-linecap="butt" />
<polyline points="1249.1,165.7 1252.9,169.9 1257.3,171.7 1295.4,171.7" fill="none" stroke="#808080" stroke-width="2" stroke-linejoin="round" stroke-linecap="butt" />
<polyline points="1297.2,184.3 1299.8,188.4 1303.7,190.7 1308.8,192.0 1321.2,192.0" fill="none" stroke="#808080" stroke-width="2" stroke-linejoin="round" stroke-linecap="butt" />
<polyline points="150.8,501.2 156.8,501.8 167.1,498.7 176.1,500.0 186.4,501.8 192.9,501.2 196.7,502.5 208.3,502.3 214.8,501.2 219.9,504.3 227.7,505.6 238.0,507.7 250.9,509.0 261.2,511.3 266.4,512.9 274.1,512.1 284.4,513.4 294.7,514.7 305.0,517.5 317.9,519.3 325.7,520.6 336.0,525.3 346.3,527.1 359.2,529.7 372.1,534.8 379.8,534.8 387.6,536.9 397.9,539.2 405.6,541.3 410.8,539.5 423.7,540.0 436.5,542.5 454.6,542.5 464.9,538.7 475.2,535.6 485.5,530.9 500.0,524.5 510.3,513.4 525.8,500.5 541.3,490.2 556.7,479.8 569.6,475.5 579.9,472.1 592.8,470.3 603.1,466.2 613.5,462.6 618.6,464.4 626.4,462.1 634.1,465.7 640.5,476.0 647.0,481.1 657.3,485.8 667.6,485.0 675.3,485.0 680.5,486.8 685.7,483.7 692.1,476.0 698.6,471.3 706.3,475.5 712.7,476.5 719.2,471.3 725.6,468.2 727.4,461.8 729.5,469.5 737.2,472.9 742.4,470.3 745.0,473.4 748.8,467.0 755.3,472.1 763.0,470.3 770.8,466.2 775.9,472.1 783.7,475.5 791.4,469.5 799.1,479.8 805.6,478.6 810.7,471.3 814.6,478.6 819.8,479.1 827.5,474.7 833.9,472.9 837.8,475.5 843.0,471.3 848.1,478.6 855.9,477.3 860.0,478.0 860.0,478.6 865.2,472.1 870.3,478.6 875.5,473.4 880.6,470.8 885.8,472.1 890.9,476.5 897.4,478.6 901.3,476.0 907.7,480.6 912.9,476.0 919.3,477.3 925.8,479.1 932.2,479.1 937.4,477.3 942.5,473.4 947.7,474.7 951.5,470.3 955.4,467.0 959.3,470.8 963.1,474.7 968.3,480.6 973.5,477.3 978.6,473.4 982.5,468.2 987.6,469.5 991.5,475.5 996.7,472.1 1001.8,471.3 1008.3,479.8 1012.1,476.0 1016.0,470.8 1021.2,474.7 1026.3,479.8 1031.5,476.5 1035.3,473.9 1040.5,478.0 1045.7,480.6 1052.1,476.0 1057.3,473.9 1063.7,479.1 1068.9,482.4 1074.0,479.8 1081.8,479.1 1088.2,481.7 1093.4,477.3 1097.2,479.1 1107.6,479.3 1115.3,477.3 1120.4,473.4 1125.6,467.0 1130.8,460.5 1135.9,456.6 1143.7,455.3 1148.8,458.4 1156.5,455.9 1161.7,452.8 1166.9,443.7 1174.6,441.9 1182.3,443.0 1187.5,442.5 1193.9,441.2 1200.4,443.7 1208.1,444.5 1220.0,447.6 1222.5,447.5 1231.5,453.2 1239.3,452.6 1249.6,457.3 1262.5,457.3 1275.3,461.1 1290.8,462.4 1298.5,465.5 1308.8,466.0 1314.0,467.6 1321.2,470.2" fill="none" stroke="#008040" stroke-width="2.2" stroke-linejoin="round" stroke-linecap="butt" />
<polyline points="150.8,420.0 156.8,419.8 163.2,416.2 170.9,415.4 181.3,413.8 200.6,412.5 217.4,409.7 229.0,407.4 248.3,404.0 256.0,404.5 297.3,402.7 317.9,401.2 330.8,398.1 364.3,397.8 385.0,395.8 397.9,394.7 409.5,391.1 426.2,389.6 436.5,385.7 457.2,384.4 483.0,382.1 500.0,378.0 515.5,376.7 541.3,373.3 569.6,372.3 577.4,369.7 603.1,370.8 623.8,369.0 628.9,367.2 644.4,367.7 654.7,365.1 680.5,363.8 696.0,362.5 714.0,365.1 732.1,363.0 757.9,362.0 781.1,359.4 799.1,357.9 814.6,360.5 843.0,362.0 860.0,361.2 860.0,362.0 875.5,362.5 885.8,363.8 898.7,363.3 911.6,361.7 942.5,361.0 963.1,362.5 986.4,363.0 999.2,366.4 1009.6,367.7 1025.0,363.8 1037.9,367.7 1050.8,367.7 1066.3,366.4 1092.1,364.6 1112.7,363.3 1130.8,362.0 1143.7,361.2 1164.3,358.6 1177.2,356.3 1192.6,354.8 1205.5,352.2 1220.0,350.1 1226.4,348.3 1247.0,347.5 1262.5,346.5 1277.9,347.8 1293.4,344.9 1308.8,344.4 1321.2,343.4" fill="none" stroke="#00FF40" stroke-width="2.2" stroke-linejoin="round" stroke-linecap="butt" />
<polyline points="150.8,206.3 155.5,205.0 159.3,201.9 163.2,197.3 167.1,193.9 172.2,192.1 176.1,188.0 181.3,185.2 186.9,184.9 191.6,180.0 196.7,176.7 200.6,173.3 205.8,170.5 210.9,165.6 216.1,164.3 218.1,167.6 222.5,164.8 229.0,163.3 249.3,163.0 254.7,157.8 259.9,156.3 265.8,156.0 271.5,150.9 274.1,149.9 276.7,145.2 280.5,141.9 284.4,136.7 288.3,135.2 294.7,134.6 296.5,130.8 298.6,132.3 301.2,129.5 306.3,128.2 312.3,127.4 317.9,122.0 323.1,119.9 338.6,119.7 341.1,117.1 344.5,118.6 348.9,114.3 352.7,113.2 373.4,113.0 377.2,107.8 381.1,106.0 406.1,105.8 409.5,101.4 413.3,99.1 421.1,98.0 457.7,97.8 462.3,93.4 468.8,91.3 500.0,91.1 503.9,90.8 507.0,87.2 509.0,89.0 512.4,90.5 516.8,86.4 522.7,83.8 540.0,83.7 556.3,83.7 557.2,86.6 560.6,85.8 564.1,89.6 567.5,90.9 570.9,90.9 573.5,96.1 578.7,97.8 583.0,103.8 587.3,109.9 590.7,115.9 595.0,119.3 598.4,119.3 601.9,124.5 604.5,126.2 606.2,129.6 608.8,133.6 611.9,133.9 613.6,139.1 616.5,146.0 617.4,152.8 620.8,155.4 624.2,160.6 626.0,164.9 628.5,167.4 629.7,173.5 631.1,180.3 633.7,186.4 635.4,193.2 638.3,200.1 639.7,207.8 640.6,215.6 642.8,219.0 644.4,230.8 648.3,233.9 652.1,245.0 656.0,257.9 661.2,263.1 668.9,269.5 676.6,278.5 679.2,286.4 684.4,290.3 687.0,300.6 692.1,298.1 696.0,303.2 699.8,318.7 703.7,331.6 706.3,335.4 708.9,344.5 712.7,353.5 716.6,354.8 721.8,361.2 726.9,356.1 729.5,367.7 733.4,378.0 737.2,381.9 742.4,375.9 745.0,383.1 748.1,377.5 751.4,381.1 755.3,392.2 760.4,393.5 763.0,390.9 766.9,394.7 770.2,388.3 773.3,397.3 777.2,406.4 782.4,408.9 786.2,405.1 791.9,400.7 795.3,408.9 799.1,420.5 805.6,420.5 810.7,412.0 814.6,425.7 819.8,430.1 826.2,427.5 833.9,423.9 837.8,427.0 843.0,424.4 846.8,434.7 849.4,437.3 852.0,434.2 855.9,437.3 860.0,434.7 860.0,436.0 863.9,429.6 867.7,434.2 872.9,429.6 879.3,426.5 883.2,430.9 887.1,429.6 890.9,434.7 897.4,432.1 901.3,424.9 905.1,427.8 909.0,426.5 912.9,416.2 919.3,420.5 923.2,419.2 927.6,423.1 932.2,419.2 936.1,413.6 938.6,415.4 943.8,410.2 946.4,412.8 950.3,408.4 954.1,406.9 958.0,414.1 961.9,420.5 967.0,430.9 970.9,425.7 974.7,422.6 977.3,414.1 982.5,412.0 987.6,420.5 991.0,432.1 994.1,434.7 996.7,429.0 1000.5,432.1 1004.4,437.3 1007.5,443.7 1012.1,437.3 1016.0,429.0 1021.2,436.0 1026.3,436.8 1030.2,429.6 1035.3,419.2 1037.9,421.3 1041.8,415.4 1045.7,418.7 1050.8,414.1 1056.0,411.0 1059.8,414.1 1063.7,422.3 1068.9,426.5 1072.7,421.8 1077.9,423.1 1081.8,420.5 1088.2,421.3 1093.4,413.6 1097.2,414.6 1103.7,411.5 1110.1,408.4 1115.3,401.2 1119.2,396.0 1123.0,388.3 1126.9,379.3 1130.8,369.0 1133.3,359.9 1137.2,353.5 1141.1,348.3 1146.2,349.6 1151.4,344.5 1157.8,338.0 1161.7,327.7 1166.9,310.9 1173.3,304.5 1177.2,296.8 1182.3,290.3 1187.5,282.6 1188.8,280.0 1190.1,273.4 1192.6,266.9 1193.9,261.8 1197.8,257.9 1201.7,251.4 1204.2,243.7 1208.1,238.6 1212.0,232.1 1215.9,224.4 1220.0,217.9 1223.8,214.7 1226.4,215.2 1230.2,219.6 1234.1,219.1 1239.3,213.2 1244.4,213.4 1249.6,213.9 1254.7,208.8 1258.6,207.0 1271.5,205.7 1275.3,201.8 1279.2,204.4 1284.4,200.5 1289.5,199.2 1303.7,198.5 1308.8,193.8 1312.7,192.5 1314.5,194.6 1321.2,192.5" fill="none" stroke="#804000" stroke-width="2.2" stroke-linejoin="round" stroke-linecap="butt" />
<polyline points="150.8,483.2 161.9,483.2 164.5,488.4 168.4,492.0 187.7,493.0 192.9,498.7 199.3,500.7 208.3,500.7 210.9,498.2 221.2,500.7 223.8,506.9 229.0,509.5 248.3,509.5 253.5,515.9 257.3,517.2 266.4,517.2 270.2,512.1 276.7,510.3 296.0,510.0 298.6,514.7 305.0,517.2 325.7,517.8 326.2,518.1 329.5,523.7 336.0,527.6 370.8,527.8 374.7,534.8 379.8,537.4 459.8,537.9 462.3,530.9 470.1,528.4 472.6,521.9 483.0,517.5 488.1,510.3 493.3,502.6 495.9,496.6 500.0,494.0 505.2,491.4 512.9,479.8 519.3,476.0 527.1,464.4 537.4,457.4 542.5,447.6 547.7,441.2 551.6,439.9 553.6,443.0 559.3,439.4 572.2,437.3 579.9,428.3 585.1,429.0 591.5,419.2 596.7,408.9 603.1,403.3 610.9,397.3 614.7,397.3 619.9,402.5 628.9,403.8 631.5,411.5 639.2,419.2 644.4,420.0 650.9,414.1 664.5,412.8 668.9,401.2 672.8,390.9 676.6,384.4 679.2,370.3 680.5,352.2 681.8,331.6 683.6,310.9 685.7,292.9 689.5,280.0 690.8,261.8 692.1,248.9 694.7,232.1 696.8,219.9 697.8,211.3 699.0,207.0 700.7,213.0 703.0,218.2 704.7,215.6 705.9,209.6 708.1,201.0 710.2,201.0 712.8,199.6 714.5,194.1 717.1,185.5 719.6,181.2 722.2,179.0 723.9,181.2 725.3,186.4 727.4,182.9 729.1,182.4 730.5,190.7 732.5,197.5 734.3,206.1 736.8,208.7 739.4,214.7 741.1,209.6 742.9,202.7 745.4,201.0 747.2,195.8 748.9,186.9 751.4,188.1 753.5,188.9 755.2,196.7 757.0,198.4 759.7,202.7 759.9,203.0 760.0,202.7 763.4,200.1 766.9,185.5 770.3,171.7 773.8,165.2 776.3,171.7 778.9,195.8 780.6,199.6 783.2,192.4 785.8,170.0 787.5,172.6 789.6,177.8 790.9,164.9 792.7,157.1 794.4,159.7 795.8,170.0 798.7,169.2 801.3,164.9 803.0,170.0 805.0,177.2 807.3,171.7 809.0,156.3 810.7,135.6 812.4,116.7 815.0,109.0 818.4,109.9 820.5,106.1 822.2,112.9 824.5,112.4 826.2,102.1 827.9,100.7 829.1,111.6 829.6,121.9 831.3,126.2 833.1,125.0 835.6,130.5 837.4,127.0 839.1,118.4 840.8,113.3 842.5,110.7 845.1,115.9 846.8,125.3 848.0,137.4 849.7,146.8 852.0,142.5 853.7,133.9 854.9,142.5 857.1,135.6 858.8,130.8 861.4,133.9 864.0,131.3 866.6,133.6 868.3,140.8 870.0,149.0 871.7,146.0 873.5,133.9 874.8,124.5 876.9,121.0 878.6,119.3 880.9,117.9 882.4,121.0 883.4,132.2 885.2,144.2 888.1,146.8 889.8,152.8 890.7,170.0 892.0,187.2 893.2,202.7 894.1,219.0 895.6,233.4 897.4,248.9 899.2,266.9 902.5,278.5 905.1,287.7 906.9,298.1 910.3,302.7 914.2,298.6 920.6,303.7 925.8,300.1 931.7,304.5 934.8,296.8 939.9,291.6 945.1,289.0 949.0,294.2 954.9,290.3 959.3,298.1 963.1,310.9 968.3,327.7 973.5,325.1 977.3,318.7 979.9,310.9 985.1,305.8 1015.2,305.8 1018.6,313.5 1022.5,323.8 1026.3,330.3 1030.2,331.6 1034.1,326.4 1039.2,324.4 1041.8,332.9 1044.4,334.7 1045.7,318.7 1047.0,280.0 1048.2,259.2 1049.5,225.7 1050.3,202.5 1051.3,199.9 1052.9,203.7 1054.7,217.9 1057.3,238.6 1059.1,254.0 1061.1,278.5 1063.7,292.9 1066.3,308.4 1067.6,316.1 1071.4,321.3 1075.3,319.2 1079.2,325.1 1081.8,329.0 1085.6,327.7 1089.5,332.9 1093.4,332.9 1097.2,338.0 1101.1,343.2 1103.7,350.9 1108.8,357.4 1111.4,362.5 1115.3,367.2 1124.3,367.7 1128.2,362.5 1132.8,359.4 1137.2,365.1 1143.7,367.7 1150.1,375.9 1156.5,369.7 1161.7,376.7 1166.9,385.7 1170.7,394.7 1174.6,401.2 1177.2,408.9 1184.9,419.2 1195.2,421.1 1200.4,415.4 1208.1,413.3 1213.3,418.7 1220.0,420.0 1221.2,420.4 1243.1,420.4 1245.7,425.6 1249.6,429.4 1262.5,430.0 1265.0,434.1 1270.2,437.7 1287.7,437.7 1289.5,443.6 1293.4,447.0 1301.6,448.0 1305.0,453.9 1308.8,457.0 1314.5,457.0 1317.9,462.4 1321.2,464.2" fill="none" stroke="#FF0000" stroke-width="2.2" stroke-linejoin="round" stroke-linecap="butt" />
<polyline points="155.9,445.3 168.7,446.6 176.5,450.5 184.2,452.6 194.5,456.9 204.8,460.3 220.3,462.4 226.8,465.4 248.7,470.3 259.0,474.2 270.6,477.3 282.2,483.2 293.8,486.1 302.8,490.5 313.1,493.6 319.6,496.9 333.8,500.8 344.1,504.6 357.0,508.3 369.9,513.7 382.8,516.2 395.7,520.1 403.4,523.0 416.3,523.5 431.8,526.1 452.4,526.1 465.3,524.8 473.0,520.9 483.3,517.1 497.8,511.1 497.8,509.8 508.1,501.3 523.6,489.2 539.1,478.9 557.1,468.0 570.0,460.8 585.5,450.5 595.8,444.6 608.7,433.7 621.6,423.4 631.9,414.4 642.2,411.3 652.5,404.6 665.4,398.4 678.3,389.9 688.6,374.4 695.1,361.5 704.1,349.9 714.4,336.5 724.7,325.4 732.5,321.0 745.4,318.5 755.7,311.2 766.0,310.0 773.7,304.8 781.5,305.6 793.1,300.9 807.2,298.9 817.6,293.2 827.9,290.1 833.0,291.1 843.3,287.5 857.8,286.7 857.8,288.0 868.1,289.3 873.3,286.7 881.0,285.5 888.7,286.0 896.5,291.9 906.8,297.8 919.7,298.9 932.6,301.7 942.9,300.4 953.2,295.8 960.9,293.2 968.7,296.3 976.4,297.3 984.2,291.9 994.5,285.5 1003.5,282.4 1012.5,284.2 1020.3,285.5 1028.0,293.2 1038.3,298.9 1046.0,303.5 1058.9,300.4 1066.7,299.1 1077.0,299.6 1089.9,303.0 1102.8,307.4 1115.7,313.8 1131.1,318.5 1141.5,324.1 1154.3,329.3 1169.8,334.5 1180.1,342.2 1190.4,352.5 1200.8,364.1 1211.1,375.7 1217.8,380.9 1221.6,384.7 1234.5,388.5 1244.8,393.7 1260.3,397.5 1275.7,402.7 1291.2,406.6 1306.6,411.7 1319.0,416.1" fill="none" stroke="#FF8000" stroke-width="1.2" stroke-linejoin="round" stroke-linecap="butt" />
<polyline points="150.8,442.5 158.1,445.0 170.9,446.3 178.7,450.2 186.4,452.3 196.7,456.6 207.0,460.0 222.5,462.1 229.0,465.1 250.9,470.0 261.2,473.9 272.8,477.0 284.4,482.9 296.0,485.8 305.0,490.2 315.3,493.3 321.8,496.6 336.0,500.5 346.3,504.3 359.2,508.0 372.1,513.4 385.0,515.9 397.9,519.8 405.6,522.7 418.5,523.2 434.0,525.8 454.6,525.8 467.5,524.5 475.2,520.6 485.5,516.8 500.0,510.8 500.0,509.5 510.3,501.0 525.8,488.9 541.3,478.6 559.3,467.7 572.2,460.5 587.7,450.2 598.0,444.3 610.9,433.4 623.8,423.1 634.1,414.1 644.4,411.0 654.7,404.3 667.6,398.1 680.5,389.6 690.8,374.1 697.3,361.2 706.3,349.6 716.6,336.2 726.9,325.1 734.7,320.7 747.6,318.2 757.9,310.9 768.2,309.7 775.9,304.5 783.7,305.3 795.3,300.6 809.4,298.6 819.8,292.9 830.1,289.8 835.2,290.8 845.5,287.2 860.0,286.4 860.0,287.7 870.3,289.0 875.5,286.4 883.2,285.2 890.9,285.7 898.7,291.6 909.0,297.5 921.9,298.6 934.8,301.4 945.1,300.1 955.4,295.5 963.1,292.9 970.9,296.0 978.6,297.0 986.4,291.6 996.7,285.2 1005.7,282.1 1014.7,283.9 1022.5,285.2 1030.2,292.9 1040.5,298.6 1048.2,303.2 1061.1,300.1 1068.9,298.8 1079.2,299.3 1092.1,302.7 1105.0,307.1 1117.9,313.5 1133.3,318.2 1143.7,323.8 1156.5,329.0 1172.0,334.2 1182.3,341.9 1192.6,352.2 1203.0,363.8 1213.3,375.4 1220.0,380.6 1223.8,384.4 1236.7,388.2 1247.0,393.4 1262.5,397.2 1277.9,402.4 1293.4,406.3 1308.8,411.4 1321.2,415.8" fill="none" stroke="#0000FF" stroke-width="2.4" stroke-linejoin="round" stroke-linecap="butt" />
<polyline points="571.0,768.0 573.0,760.0 575.5,750.0 578.2,745.0 579.5,752.0 581.5,762.0 585.5,768.0" fill="none" stroke="#000" stroke-width="1.1" stroke-linejoin="round" stroke-linecap="butt" />
<polyline points="884.0,768.0 887.0,754.0 889.5,743.6 891.6,750.0 894.6,762.0 899.7,768.0" fill="none" stroke="#000" stroke-width="1.1" stroke-linejoin="round" stroke-linecap="butt" />
<rect x="151" y="767" width="1169" height="1" fill="#00E0FF" shape-rendering="crispEdges"/>
<rect x="151" y="768" width="1170" height="1" fill="#747474" shape-rendering="crispEdges"/>
<g fill="#747474" shape-rendering="crispEdges">
<rect x="151" y="769" width="1" height="4"/>
<rect x="200" y="769" width="1" height="4"/>
<rect x="249" y="769" width="1" height="4"/>
<rect x="297" y="769" width="1" height="4"/>
<rect x="346" y="769" width="1" height="4"/>
<rect x="395" y="769" width="1" height="4"/>
<rect x="443" y="769" width="1" height="4"/>
<rect x="492" y="769" width="1" height="4"/>
<rect x="541" y="769" width="1" height="4"/>
<rect x="590" y="769" width="1" height="4"/>
<rect x="639" y="769" width="1" height="4"/>
<rect x="687" y="769" width="1" height="4"/>
<rect x="736" y="769" width="1" height="4"/>
<rect x="785" y="769" width="1" height="4"/>
<rect x="833" y="769" width="1" height="4"/>
<rect x="882" y="769" width="1" height="4"/>
<rect x="931" y="769" width="1" height="4"/>
<rect x="980" y="769" width="1" height="4"/>
<rect x="1029" y="769" width="1" height="4"/>
<rect x="1077" y="769" width="1" height="4"/>
<rect x="1126" y="769" width="1" height="4"/>
<rect x="1175" y="769" width="1" height="4"/>
<rect x="1223" y="769" width="1" height="4"/>
<rect x="1272" y="769" width="1" height="4"/>
<rect x="1321" y="769" width="1" height="4"/>
</g>
<g fill="#747474" shape-rendering="crispEdges">
<rect x="150" y="47" width="2" height="722"/>
<rect x="150" y="47" width="1172" height="2"/>
<rect x="1320" y="47" width="2" height="722"/>
<rect x="40" y="48" width="1" height="721"/>
<rect x="36" y="48" width="8" height="1"/>
<rect x="36" y="768" width="8" height="1"/>
<rect x="77" y="48" width="1" height="721"/>
<rect x="73" y="48" width="8" height="1"/>
<rect x="73" y="768" width="8" height="1"/>
<rect x="114" y="48" width="1" height="721"/>
<rect x="110" y="48" width="8" height="1"/>
<rect x="110" y="768" width="8" height="1"/>
<rect x="1358" y="48" width="1" height="721"/>
<rect x="1354" y="48" width="8" height="1"/>
<rect x="1354" y="768" width="8" height="1"/>
<rect x="1395" y="48" width="1" height="721"/>
<rect x="1391" y="48" width="8" height="1"/>
<rect x="1391" y="768" width="8" height="1"/>
<rect x="36" y="48" width="4" height="1"/>
<rect x="36" y="128" width="4" height="1"/>
<rect x="36" y="208" width="4" height="1"/>
<rect x="36" y="288" width="4" height="1"/>
<rect x="36" y="368" width="4" height="1"/>
<rect x="36" y="448" width="4" height="1"/>
<rect x="36" y="528" width="4" height="1"/>
<rect x="36" y="608" width="4" height="1"/>
<rect x="36" y="688" width="4" height="1"/>
<rect x="36" y="768" width="4" height="1"/>
<rect x="73" y="48" width="4" height="1"/>
<rect x="73" y="108" width="4" height="1"/>
<rect x="73" y="168" width="4" height="1"/>
<rect x="73" y="228" width="4" height="1"/>
<rect x="73" y="288" width="4" height="1"/>
<rect x="73" y="348" width="4" height="1"/>
<rect x="73" y="408" width="4" height="1"/>
<rect x="73" y="468" width="4" height="1"/>
<rect x="73" y="528" width="4" height="1"/>
<rect x="73" y="588" width="4" height="1"/>
<rect x="73" y="648" width="4" height="1"/>
<rect x="73" y="708" width="4" height="1"/>
<rect x="73" y="768" width="4" height="1"/>
<rect x="110" y="48" width="4" height="1"/>
<rect x="110" y="138" width="4" height="1"/>
<rect x="110" y="228" width="4" height="1"/>
<rect x="110" y="318" width="4" height="1"/>
<rect x="110" y="408" width="4" height="1"/>
<rect x="110" y="498" width="4" height="1"/>
<rect x="110" y="588" width="4" height="1"/>
<rect x="110" y="678" width="4" height="1"/>
<rect x="110" y="768" width="4" height="1"/>
<rect x="146" y="48" width="4" height="1"/>
<rect x="146" y="228" width="4" height="1"/>
<rect x="146" y="408" width="4" height="1"/>
<rect x="146" y="588" width="4" height="1"/>
<rect x="146" y="768" width="4" height="1"/>
<rect x="1322" y="48" width="4" height="1"/>
<rect x="1322" y="120" width="4" height="1"/>
<rect x="1322" y="192" width="4" height="1"/>
<rect x="1322" y="264" width="4" height="1"/>
<rect x="1322" y="336" width="4" height="1"/>
<rect x="1322" y="408" width="4" height="1"/>
<rect x="1322" y="480" width="4" height="1"/>
<rect x="1322" y="552" width="4" height="1"/>
<rect x="1322" y="624" width="4" height="1"/>
<rect x="1322" y="696" width="4" height="1"/>
<rect x="1322" y="768" width="4" height="1"/>
<rect x="1359" y="48" width="4" height="1"/>
<rect x="1359" y="228" width="4" height="1"/>
<rect x="1359" y="408" width="4" height="1"/>
<rect x="1359" y="588" width="4" height="1"/>
<rect x="1359" y="768" width="4" height="1"/>
<rect x="1396" y="48" width="4" height="1"/>
<rect x="1396" y="108" width="4" height="1"/>
<rect x="1396" y="168" width="4" height="1"/>
<rect x="1396" y="228" width="4" height="1"/>
<rect x="1396" y="288" width="4" height="1"/>
<rect x="1396" y="348" width="4" height="1"/>
<rect x="1396" y="408" width="4" height="1"/>
<rect x="1396" y="468" width="4" height="1"/>
<rect x="1396" y="528" width="4" height="1"/>
<rect x="1396" y="588" width="4" height="1"/>
<rect x="1396" y="648" width="4" height="1"/>
<rect x="1396" y="708" width="4" height="1"/>
<rect x="1396" y="768" width="4" height="1"/>
</g>
<rect x="411" y="764" width="2" height="13" fill="#FFF000"/>
<rect x="463" y="764" width="2" height="13" fill="#777"/>
<rect x="1208" y="764" width="2" height="13" fill="#FFF000"/>
<rect x="1276" y="764" width="2" height="13" fill="#777"/>
<g font-family='"Liberation Sans", sans-serif' font-size="11.5">
<text transform="translate(34.5,52.9) scale(0.87,1)" fill="#0000FF" stroke="#0000FF" stroke-width="0.14" text-anchor="end">35.0</text>
<text transform="translate(34.5,132.9) scale(0.87,1)" fill="#0000FF" stroke="#0000FF" stroke-width="0.14" text-anchor="end">30.0</text>
<text transform="translate(34.5,212.9) scale(0.87,1)" fill="#0000FF" stroke="#0000FF" stroke-width="0.14" text-anchor="end">25.0</text>
<text transform="translate(34.5,292.9) scale(0.87,1)" fill="#0000FF" stroke="#0000FF" stroke-width="0.14" text-anchor="end">20.0</text>
<text transform="translate(34.5,372.9) scale(0.87,1)" fill="#0000FF" stroke="#0000FF" stroke-width="0.14" text-anchor="end">15.0</text>
<text transform="translate(34.5,452.9) scale(0.87,1)" fill="#0000FF" stroke="#0000FF" stroke-width="0.14" text-anchor="end">10.0</text>
<text transform="translate(34.5,532.9) scale(0.87,1)" fill="#0000FF" stroke="#0000FF" stroke-width="0.14" text-anchor="end">5.0</text>
<text transform="translate(34.5,612.9) scale(0.87,1)" fill="#0000FF" stroke="#0000FF" stroke-width="0.14" text-anchor="end">0.0</text>
<text transform="translate(34.5,692.9) scale(0.87,1)" fill="#0000FF" stroke="#0000FF" stroke-width="0.14" text-anchor="end">-5.0</text>
<text transform="translate(34.5,772.9) scale(0.87,1)" fill="#0000FF" stroke="#0000FF" stroke-width="0.14" text-anchor="end">-10.0</text>
<text transform="translate(71.5,52.9) scale(0.87,1)" fill="#00FF40" stroke="#00FF40" stroke-width="0.14" text-anchor="end">1040</text>
<text transform="translate(71.5,112.9) scale(0.87,1)" fill="#00FF40" stroke="#00FF40" stroke-width="0.14" text-anchor="end">1035</text>
<text transform="translate(71.5,172.9) scale(0.87,1)" fill="#00FF40" stroke="#00FF40" stroke-width="0.14" text-anchor="end">1030</text>
<text transform="translate(71.5,232.9) scale(0.87,1)" fill="#00FF40" stroke="#00FF40" stroke-width="0.14" text-anchor="end">1025</text>
<text transform="translate(71.5,292.9) scale(0.87,1)" fill="#00FF40" stroke="#00FF40" stroke-width="0.14" text-anchor="end">1020</text>
<text transform="translate(71.5,352.9) scale(0.87,1)" fill="#00FF40" stroke="#00FF40" stroke-width="0.14" text-anchor="end">1015</text>
<text transform="translate(71.5,412.9) scale(0.87,1)" fill="#00FF40" stroke="#00FF40" stroke-width="0.14" text-anchor="end">1010</text>
<text transform="translate(71.5,472.9) scale(0.87,1)" fill="#00FF40" stroke="#00FF40" stroke-width="0.14" text-anchor="end">1005</text>
<text transform="translate(71.5,532.9) scale(0.87,1)" fill="#00FF40" stroke="#00FF40" stroke-width="0.14" text-anchor="end">1000</text>
<text transform="translate(71.5,592.9) scale(0.87,1)" fill="#00FF40" stroke="#00FF40" stroke-width="0.14" text-anchor="end">995</text>
<text transform="translate(71.5,652.9) scale(0.87,1)" fill="#00FF40" stroke="#00FF40" stroke-width="0.14" text-anchor="end">990</text>
<text transform="translate(71.5,712.9) scale(0.87,1)" fill="#00FF40" stroke="#00FF40" stroke-width="0.14" text-anchor="end">985</text>
<text transform="translate(71.5,772.9) scale(0.87,1)" fill="#00FF40" stroke="#00FF40" stroke-width="0.14" text-anchor="end">980</text>
<text transform="translate(108.5,52.9) scale(0.87,1)" fill="#000" stroke="#000" stroke-width="0.14" text-anchor="end">40.0</text>
<text transform="translate(108.5,142.9) scale(0.87,1)" fill="#000" stroke="#000" stroke-width="0.14" text-anchor="end">35.0</text>
<text transform="translate(108.5,232.9) scale(0.87,1)" fill="#000" stroke="#000" stroke-width="0.14" text-anchor="end">30.0</text>
<text transform="translate(108.5,322.9) scale(0.87,1)" fill="#000" stroke="#000" stroke-width="0.14" text-anchor="end">25.0</text>
<text transform="translate(108.5,412.9) scale(0.87,1)" fill="#000" stroke="#000" stroke-width="0.14" text-anchor="end">20.0</text>
<text transform="translate(108.5,502.9) scale(0.87,1)" fill="#000" stroke="#000" stroke-width="0.14" text-anchor="end">15.0</text>
<text transform="translate(108.5,592.9) scale(0.87,1)" fill="#000" stroke="#000" stroke-width="0.14" text-anchor="end">10.0</text>
<text transform="translate(108.5,682.9) scale(0.87,1)" fill="#000" stroke="#000" stroke-width="0.14" text-anchor="end">5.0</text>
<text transform="translate(108.5,772.9) scale(0.87,1)" fill="#000" stroke="#000" stroke-width="0.14" text-anchor="end">0.0</text>
<text transform="translate(145.5,52.9) scale(0.87,1)" fill="#FFE800" stroke="#FFE800" stroke-width="0.14" text-anchor="end">20</text>
<text transform="translate(145.5,232.9) scale(0.87,1)" fill="#FFE800" stroke="#FFE800" stroke-width="0.14" text-anchor="end">15</text>
<text transform="translate(145.5,412.9) scale(0.87,1)" fill="#FFE800" stroke="#FFE800" stroke-width="0.14" text-anchor="end">10</text>
<text transform="translate(145.5,592.9) scale(0.87,1)" fill="#FFE800" stroke="#FFE800" stroke-width="0.14" text-anchor="end">5</text>
<text transform="translate(145.5,772.9) scale(0.87,1)" fill="#FFE800" stroke="#FFE800" stroke-width="0.14" text-anchor="end">0</text>
<text transform="translate(1328.5,52.9) scale(0.87,1)" fill="#804000" stroke="#804000" stroke-width="0.14" text-anchor="start">100</text>
<text transform="translate(1328.5,124.9) scale(0.87,1)" fill="#804000" stroke="#804000" stroke-width="0.14" text-anchor="start">90</text>
<text transform="translate(1328.5,196.9) scale(0.87,1)" fill="#804000" stroke="#804000" stroke-width="0.14" text-anchor="start">80</text>
<text transform="translate(1328.5,268.9) scale(0.87,1)" fill="#804000" stroke="#804000" stroke-width="0.14" text-anchor="start">70</text>
<text transform="translate(1328.5,340.9) scale(0.87,1)" fill="#804000" stroke="#804000" stroke-width="0.14" text-anchor="start">60</text>
<text transform="translate(1328.5,412.9) scale(0.87,1)" fill="#804000" stroke="#804000" stroke-width="0.14" text-anchor="start">50</text>
<text transform="translate(1328.5,484.9) scale(0.87,1)" fill="#804000" stroke="#804000" stroke-width="0.14" text-anchor="start">40</text>
<text transform="translate(1328.5,556.9) scale(0.87,1)" fill="#804000" stroke="#804000" stroke-width="0.14" text-anchor="start">30</text>
<text transform="translate(1328.5,628.9) scale(0.87,1)" fill="#804000" stroke="#804000" stroke-width="0.14" text-anchor="start">20</text>
<text transform="translate(1328.5,700.9) scale(0.87,1)" fill="#804000" stroke="#804000" stroke-width="0.14" text-anchor="start">10</text>
<text transform="translate(1328.5,772.9) scale(0.87,1)" fill="#804000" stroke="#804000" stroke-width="0.14" text-anchor="start">0</text>
<text transform="translate(1365,52.9) scale(0.87,1)" fill="#00DCFF" stroke="#00DCFF" stroke-width="0.14" text-anchor="start">40.0</text>
<text transform="translate(1365,232.9) scale(0.87,1)" fill="#00DCFF" stroke="#00DCFF" stroke-width="0.14" text-anchor="start">30.0</text>
<text transform="translate(1365,412.9) scale(0.87,1)" fill="#00DCFF" stroke="#00DCFF" stroke-width="0.14" text-anchor="start">20.0</text>
<text transform="translate(1365,592.9) scale(0.87,1)" fill="#00DCFF" stroke="#00DCFF" stroke-width="0.14" text-anchor="start">10.0</text>
<text transform="translate(1365,772.9) scale(0.87,1)" fill="#00DCFF" stroke="#00DCFF" stroke-width="0.14" text-anchor="start">0.0</text>
<text transform="translate(1401.5,52.9) scale(0.87,1)" fill="#808080" stroke="#808080" stroke-width="0.14" text-anchor="start">360</text>
<text transform="translate(1420.5,52.9) scale(0.87,1)" fill="#808080" stroke="#808080" stroke-width="0.14" text-anchor="start">N</text>
<text transform="translate(1401.5,112.9) scale(0.87,1)" fill="#808080" stroke="#808080" stroke-width="0.14" text-anchor="start">330</text>
<text transform="translate(1401.5,172.9) scale(0.87,1)" fill="#808080" stroke="#808080" stroke-width="0.14" text-anchor="start">300</text>
<text transform="translate(1401.5,232.9) scale(0.87,1)" fill="#808080" stroke="#808080" stroke-width="0.14" text-anchor="start">270</text>
<text transform="translate(1420.5,232.9) scale(0.87,1)" fill="#808080" stroke="#808080" stroke-width="0.14" text-anchor="start">W</text>
<text transform="translate(1401.5,292.9) scale(0.87,1)" fill="#808080" stroke="#808080" stroke-width="0.14" text-anchor="start">240</text>
<text transform="translate(1401.5,352.9) scale(0.87,1)" fill="#808080" stroke="#808080" stroke-width="0.14" text-anchor="start">210</text>
<text transform="translate(1401.5,412.9) scale(0.87,1)" fill="#808080" stroke="#808080" stroke-width="0.14" text-anchor="start">180</text>
<text transform="translate(1420.5,412.9) scale(0.87,1)" fill="#808080" stroke="#808080" stroke-width="0.14" text-anchor="start">S</text>
<text transform="translate(1401.5,472.9) scale(0.87,1)" fill="#808080" stroke="#808080" stroke-width="0.14" text-anchor="start">150</text>
<text transform="translate(1401.5,532.9) scale(0.87,1)" fill="#808080" stroke="#808080" stroke-width="0.14" text-anchor="start">120</text>
<text transform="translate(1401.5,592.9) scale(0.87,1)" fill="#808080" stroke="#808080" stroke-width="0.14" text-anchor="start">90</text>
<text transform="translate(1420.5,592.9) scale(0.87,1)" fill="#808080" stroke="#808080" stroke-width="0.14" text-anchor="start">O</text>
<text transform="translate(1401.5,652.9) scale(0.87,1)" fill="#808080" stroke="#808080" stroke-width="0.14" text-anchor="start">60</text>
<text transform="translate(1401.5,712.9) scale(0.87,1)" fill="#808080" stroke="#808080" stroke-width="0.14" text-anchor="start">30</text>
<text transform="translate(1401.5,772.9) scale(0.87,1)" fill="#808080" stroke="#808080" stroke-width="0.14" text-anchor="start">0</text>
<text transform="translate(1420.5,772.9) scale(0.87,1)" fill="#808080" stroke="#808080" stroke-width="0.14" text-anchor="start">N</text>
<text transform="translate(25,37.0) scale(0.9,1)" fill="#0000FF" stroke="#0000FF" stroke-width="0.14" text-anchor="middle">°C</text>
<text transform="translate(57.8,37.0) scale(0.92,1)" fill="#00FF40" stroke="#00FF40" stroke-width="0.14" text-anchor="middle">hPa</text>
<text transform="translate(91.5,37.0) scale(0.97,1)" fill="#000" stroke="#000" stroke-width="0.14" text-anchor="middle">km/h</text>
<text transform="translate(133,37.0) scale(0.97,1)" fill="#FFE800" stroke="#FFE800" stroke-width="0.14" text-anchor="middle">min</text>
<text transform="translate(1325,37.0) scale(0.9,1)" fill="#804000" stroke="#804000" stroke-width="0.14" text-anchor="middle">%</text>
<text transform="translate(1367,37.0) scale(0.95,1)" fill="#00DCFF" stroke="#00DCFF" stroke-width="0.14" text-anchor="middle">l/m²</text>
<text transform="translate(1397.5,37.0) scale(0.9,1)" fill="#808080" stroke="#808080" stroke-width="0.14" text-anchor="middle">°</text>
<text transform="translate(151.5,786.6) scale(0.87,1)" fill="#000" stroke="#000" stroke-width="0.14" text-anchor="middle">00:00</text>
<text transform="translate(200.5,786.6) scale(0.87,1)" fill="#000" stroke="#000" stroke-width="0.14" text-anchor="middle">01:00</text>
<text transform="translate(249.5,786.6) scale(0.87,1)" fill="#000" stroke="#000" stroke-width="0.14" text-anchor="middle">02:00</text>
<text transform="translate(297.5,786.6) scale(0.87,1)" fill="#000" stroke="#000" stroke-width="0.14" text-anchor="middle">03:00</text>
<text transform="translate(346.5,786.6) scale(0.87,1)" fill="#000" stroke="#000" stroke-width="0.14" text-anchor="middle">04:00</text>
<text transform="translate(395.5,786.6) scale(0.87,1)" fill="#000" stroke="#000" stroke-width="0.14" text-anchor="middle">05:00</text>
<text transform="translate(443.5,786.6) scale(0.87,1)" fill="#000" stroke="#000" stroke-width="0.14" text-anchor="middle">06:00</text>
<text transform="translate(492.5,786.6) scale(0.87,1)" fill="#000" stroke="#000" stroke-width="0.14" text-anchor="middle">07:00</text>
<text transform="translate(541.5,786.6) scale(0.87,1)" fill="#000" stroke="#000" stroke-width="0.14" text-anchor="middle">08:00</text>
<text transform="translate(590.5,786.6) scale(0.87,1)" fill="#000" stroke="#000" stroke-width="0.14" text-anchor="middle">09:00</text>
<text transform="translate(639.5,786.6) scale(0.87,1)" fill="#000" stroke="#000" stroke-width="0.14" text-anchor="middle">10:00</text>
<text transform="translate(687.5,786.6) scale(0.87,1)" fill="#000" stroke="#000" stroke-width="0.14" text-anchor="middle">11:00</text>
<text transform="translate(736.5,786.6) scale(0.87,1)" fill="#000" stroke="#000" stroke-width="0.14" text-anchor="middle">12:00</text>
<text transform="translate(785.5,786.6) scale(0.87,1)" fill="#000" stroke="#000" stroke-width="0.14" text-anchor="middle">13:00</text>
<text transform="translate(833.5,786.6) scale(0.87,1)" fill="#000" stroke="#000" stroke-width="0.14" text-anchor="middle">14:00</text>
<text transform="translate(882.5,786.6) scale(0.87,1)" fill="#000" stroke="#000" stroke-width="0.14" text-anchor="middle">15:00</text>
<text transform="translate(931.5,786.6) scale(0.87,1)" fill="#000" stroke="#000" stroke-width="0.14" text-anchor="middle">16:00</text>
<text transform="translate(980.5,786.6) scale(0.87,1)" fill="#000" stroke="#000" stroke-width="0.14" text-anchor="middle">17:00</text>
<text transform="translate(1029.5,786.6) scale(0.87,1)" fill="#000" stroke="#000" stroke-width="0.14" text-anchor="middle">18:00</text>
<text transform="translate(1077.5,786.6) scale(0.87,1)" fill="#000" stroke="#000" stroke-width="0.14" text-anchor="middle">19:00</text>
<text transform="translate(1126.5,786.6) scale(0.87,1)" fill="#000" stroke="#000" stroke-width="0.14" text-anchor="middle">20:00</text>
<text transform="translate(1175.5,786.6) scale(0.87,1)" fill="#000" stroke="#000" stroke-width="0.14" text-anchor="middle">21:00</text>
<text transform="translate(1223.5,786.6) scale(0.87,1)" fill="#000" stroke="#000" stroke-width="0.14" text-anchor="middle">22:00</text>
<text transform="translate(1272.5,786.6) scale(0.87,1)" fill="#000" stroke="#000" stroke-width="0.14" text-anchor="middle">23:00</text>
<text transform="translate(1321.5,786.6) scale(0.87,1)" fill="#000" stroke="#000" stroke-width="0.14" text-anchor="middle">24:00</text>
<text transform="translate(10.5,797.9) scale(0.87,1)" fill="#000" stroke="#000" stroke-width="0.14" text-anchor="start">16:21</text>
<text transform="translate(379,797.9) scale(0.87,1)" fill="#000" stroke="#000" stroke-width="0.14" text-anchor="start">05:20</text>
<text transform="translate(471,797.9) scale(0.87,1)" fill="#000" stroke="#000" stroke-width="0.14" text-anchor="start">06:25</text>
<text transform="translate(1175.5,797.9) scale(0.87,1)" fill="#000" stroke="#000" stroke-width="0.14" text-anchor="start">21:42</text>
<text transform="translate(1284,797.9) scale(0.87,1)" fill="#000" stroke="#000" stroke-width="0.14" text-anchor="start">23:06</text>
</g>
<g fill="#FFFF00" shape-rendering="crispEdges"><rect x="43" y="791" width="3" height="1"/><rect x="41" y="792" width="7" height="2"/><rect x="40" y="794" width="9" height="3"/></g>
<g stroke="#FFF27a" stroke-width="1"><path d="M408 789.5l8.5 8.5M416.5 789.5l-8.5 8.5M412.2 788v11.5M407 793.8h10.5"/></g><circle cx="412.2" cy="793.8" r="3.3" fill="#FFFF00"/>
<rect x="459.5" y="788.5" width="5" height="5" fill="none" stroke="#3030c0" stroke-width="1" stroke-dasharray="2 1.5"/>
<path d="M466.5 790.5l3 4h-2v4h-2v-4h-2z" fill="#FFE800" stroke="#554400" stroke-width="0.6"/>
<rect x="1206.5" y="791.5" width="5" height="5" fill="none" stroke="#FFF27a" stroke-width="1.2"/>
<path d="M1275.5 797l-3-4h2v-4h2v4h2z" fill="#FFE800" stroke="#554400" stroke-width="0.4"/>
<path d="M1272 789.5h2M1277 796.5h2M1281 796.5h2" stroke="#3030c0" stroke-width="1"/>
<g shape-rendering="crispEdges">
<rect x="1" y="800" width="1430" height="90" fill="#FF8000"/><rect x="1431" y="800" width="1" height="131" fill="#9aa8b0"/>
<rect x="0" y="890" width="1431" height="1" fill="#a4acb4"/>
<rect x="0" y="891" width="1431" height="1" fill="#ffffff"/>
<rect x="0" y="892" width="1431" height="1" fill="#cbbccb"/>
<rect x="1" y="893" width="1429" height="36" fill="#2EE81B"/>
<rect x="0" y="929" width="1431" height="1" fill="#fff"/><rect x="0" y="930" width="1432" height="1" fill="#c8c0c8"/>
<rect x="87" y="800" width="1" height="89" fill="#ffffff"/><rect x="88" y="800" width="1" height="89" fill="#929ea6"/>
<rect x="87" y="892" width="1" height="38" fill="#f8e8f8"/><rect x="88" y="891" width="1" height="39" fill="#929ea6"/>
<rect x="204" y="800" width="1" height="89" fill="#ffffff"/><rect x="205" y="800" width="1" height="89" fill="#929ea6"/>
<rect x="204" y="892" width="1" height="38" fill="#f8e8f8"/><rect x="205" y="891" width="1" height="39" fill="#929ea6"/>
<rect x="322" y="800" width="1" height="89" fill="#ffffff"/><rect x="323" y="800" width="1" height="89" fill="#929ea6"/>
<rect x="322" y="892" width="1" height="38" fill="#f8e8f8"/><rect x="323" y="891" width="1" height="39" fill="#929ea6"/>
<rect x="440" y="800" width="1" height="89" fill="#ffffff"/><rect x="441" y="800" width="1" height="89" fill="#929ea6"/>
<rect x="440" y="892" width="1" height="38" fill="#f8e8f8"/><rect x="441" y="891" width="1" height="39" fill="#929ea6"/>
<rect x="558" y="800" width="1" height="89" fill="#ffffff"/><rect x="559" y="800" width="1" height="89" fill="#929ea6"/>
<rect x="558" y="892" width="1" height="38" fill="#f8e8f8"/><rect x="559" y="891" width="1" height="39" fill="#929ea6"/>
<rect x="676" y="800" width="1" height="89" fill="#ffffff"/><rect x="677" y="800" width="1" height="89" fill="#929ea6"/>
<rect x="794" y="800" width="1" height="89" fill="#ffffff"/><rect x="795" y="800" width="1" height="89" fill="#929ea6"/>
<rect x="912" y="800" width="1" height="89" fill="#ffffff"/><rect x="913" y="800" width="1" height="89" fill="#929ea6"/>
<rect x="0" y="800" width="1" height="131" fill="#fff"/>
<rect x="1430" y="891" width="1" height="39" fill="#fff"/>
</g>
<g font-family='"DejaVu Sans Condensed", "DejaVu Sans", "Liberation Sans", sans-serif' font-size="11" fill="#000">
<text x="8.4" y="818.3" font-weight="bold">Sensor</text>
<text x="8.4" y="834.3" font-weight="bold">MinWert</text>
<text x="8.4" y="850.3" font-weight="bold">MaxWert</text>
<text x="8.4" y="866.3" font-weight="bold">Durchschnitt</text>
<text x="8.4" y="882.2" font-weight="bold">07.07. 23:59</text>
<text x="94.4" y="818.3" font-weight="bold">Temp. 2m</text>
<text x="198.8" y="818.3" font-weight="bold" text-anchor="end">°C</text>
<text x="99.7" y="834.3">05:46</text>
<text x="198.3" y="834.3" text-anchor="end">5.1</text>
<text x="101" y="850.3">17:26</text>
<text x="198.3" y="850.3" text-anchor="end">20.4</text>
<text x="198.3" y="866.3" text-anchor="end">13.41</text>
<text x="96.7" y="882.2">F: 80 %</text>
<text x="198.8" y="882.2" font-weight="bold" text-anchor="end">11.9</text>
<text x="212.6" y="818.3" font-weight="bold">Temp. 5cm</text>
<text x="317.1" y="818.3" font-weight="bold" text-anchor="end">°C</text>
<text x="217.6" y="834.3">04:33</text>
<text x="316.5" y="834.3" text-anchor="end">4.4</text>
<text x="219" y="850.3">13:50</text>
<text x="316.5" y="850.3" text-anchor="end">32.2</text>
<text x="316.5" y="866.3" text-anchor="end">14.07</text>
<text x="317.1" y="882.2" font-weight="bold" text-anchor="end">8.9</text>
<text x="330.2" y="818.3" font-weight="bold">Feuchte A.</text>
<text x="434.5" y="818.3" font-weight="bold" text-anchor="end">%</text>
<text x="337" y="834.3">14:17</text>
<text x="434" y="834.3" text-anchor="end">44</text>
<text x="335.7" y="850.3">07:15</text>
<text x="434" y="850.3" text-anchor="end">95</text>
<text x="434" y="866.3" text-anchor="end">71</text>
<text x="332.7" y="882.2">8.48 g/m³</text>
<text x="434.5" y="882.2" font-weight="bold" text-anchor="end">80</text>
<text x="448.4" y="818.3" font-weight="bold">Regen</text>
<text x="552.2" y="818.3" font-weight="bold" text-anchor="end">l/m²</text>
<text x="453.9" y="850.3">00:00</text>
<text x="551.5" y="850.3" text-anchor="end">0.0</text>
<text x="447.6" y="866.3">Gesamt:</text>
<text x="551.5" y="866.3" text-anchor="end">0.0</text>
<text x="450.9" y="882.2">0.0 l/m²</text>
<text x="552.2" y="882.2" font-weight="bold" text-anchor="end">0.0</text>
<text x="565.9" y="818.3" font-weight="bold">Luftdruck</text>
<text x="670.7" y="818.3" font-weight="bold" text-anchor="end">hPa</text>
<text x="571.9" y="834.3">00:02</text>
<text x="670" y="834.3" text-anchor="end">1008.9</text>
<text x="572.2" y="850.3">23:54</text>
<text x="670" y="850.3" text-anchor="end">1015.4</text>
<text x="566.4" y="866.3">^0.9hPa/h</text>
<text x="670" y="866.3" text-anchor="end">1012.9</text>
<text x="565.9" y="882.2">bewölkt</text>
<text x="670.7" y="882.2" font-weight="bold" text-anchor="end">1015.3</text>
<text x="684.5" y="818.3" font-weight="bold">Sonnenschein</text>
<text x="788.9" y="818.3" font-weight="bold" text-anchor="end">min</text>
<text x="690.8" y="850.3">11:28</text>
<text x="787.8" y="850.3" text-anchor="end">1</text>
<text x="684.5" y="866.3">4:57 h</text>
<text x="787.8" y="866.3" text-anchor="end">0</text>
<text x="788.9" y="882.2" font-weight="bold" text-anchor="end">0</text>
<text x="802.6" y="818.3" font-weight="bold">Windböen</text>
<text x="905.9" y="818.3" font-weight="bold" text-anchor="end">km/h</text>
<text x="802.1" y="834.3">Ø 10 min.</text>
<text x="905.2" y="834.3" text-anchor="end">0.0</text>
<text x="807.7" y="850.3">08:36</text>
<text x="905.2" y="850.3" text-anchor="end">NW 17.6</text>
<text x="807.7" y="866.3">3.1 km</text>
<text x="905.2" y="866.3" text-anchor="end">0.1</text>
<text x="807.7" y="882.2">0 Bft N</text>
<text x="905.9" y="882.2" font-weight="bold" text-anchor="end">0.0</text>
<text x="920.3" y="818.3" font-weight="bold">Wind</text>
<text x="1022" y="818.3" font-weight="bold" text-anchor="end">km/h</text>
<text x="920" y="834.3">Ø 10 min.</text>
<text x="1021.3" y="834.3" text-anchor="end">0.0</text>
<text x="925.8" y="850.3">08:38</text>
<text x="1021.3" y="850.3" text-anchor="end">S 1.4</text>
<text x="925.8" y="866.3">3.1 km</text>
<text x="1021.3" y="866.3" text-anchor="end">0.0</text>
<text x="925.8" y="882.2">0 Bft W-NW</text>
<text x="1022" y="882.2" font-weight="bold" text-anchor="end">0.0</text>
<text x="7.9" y="906.9">Wetterdaten</text>
<text x="7.9" y="923.2">07.07.24 23:59</text>
<text x="93.9" y="906.9">Temp. I.</text>
<text x="198.6" y="906.9" text-anchor="end">21.5 °C</text>
<text x="93.9" y="923.2">Feuchte I.</text>
<text x="198.6" y="923.2" text-anchor="end">49 %</text>
<text x="210" y="906.9">Temp. 2m</text>
<text x="314.4" y="906.9" text-anchor="end">11.9 °C</text>
<text x="210" y="923.2">Feuchte A.</text>
<text x="314.4" y="923.2" text-anchor="end">80 %</text>
<text x="329.5" y="906.9">Luftdruck</text>
<text x="434.3" y="906.9" text-anchor="end">1015.3 hPa</text>
<text x="329.5" y="923.2">Regen</text>
<text x="434.3" y="923.2" text-anchor="end">0.0 l/m²</text>
<text x="447.6" y="906.9">Wind</text>
<text x="552" y="906.9" text-anchor="end">0.0 km/h</text>
<text x="447.6" y="923.2">Richtung</text>
<text x="552" y="923.2" text-anchor="end">W-NW</text>
<text x="1099.7" y="906.9">WR 288°</text>
<text x="1099.7" y="923.2">WC 11.9°C</text>
<text x="1169.5" y="906.9">Solar</text>
<text x="1169.5" y="923.2">ET</text>
<text x="1285.7" y="906.9" text-anchor="end">0 W/m²</text>
<text x="1276.1" y="923.2" text-anchor="end">0.000 mm</text>
<text x="1309.6" y="906.9">UV</text>
<text x="1309.6" y="923.2">Taupunkt</text>
<text x="1425.2" y="906.9" text-anchor="end">0.0 UV-I</text>
<text x="1415.9" y="923.2" text-anchor="end">8.6 °C</text>
</g>
<g>
<rect x="562" y="894" width="34" height="34" fill="#4a9ad2"/>
<rect x="562" y="894" width="34" height="1" fill="#101030"/><rect x="562" y="894" width="1" height="34" fill="#101030"/>
<path d="M591 923 l5 -3 v8 h-9 z" fill="#c4dcee" opacity="0.8"/>
<polygon points="575.0,898.7 576.8,901.1 579.7,900.6 579.2,903.5 581.6,905.3 579.2,907.1 579.7,910.0 576.8,909.5 575.0,911.9 573.2,909.5 570.3,910.0 570.8,907.1 568.4,905.3 570.8,903.5 570.3,900.6 573.2,901.1" fill="#d2e03c"/>
<circle cx="574.5" cy="906" r="3" fill="#ecf07c"/>
<path d="M565 918 q10 4 21 1.5 l8 -1 v2 q-14 3 -29 0z" fill="#3c80b8" opacity="0.7"/>
<ellipse cx="589" cy="912.8" rx="7" ry="2.4" fill="#e8f2f6" opacity="0.85"/>
<ellipse cx="576" cy="913.6" rx="10.6" ry="3.9" fill="#f2f8f4"/>
<ellipse cx="573" cy="911" rx="5" ry="2" fill="#e9f2a0" opacity="0.7"/>
<ellipse cx="584.5" cy="922.6" rx="5.4" ry="2.3" fill="#f2f8f4"/>
</g>
</svg>
</body></html>
